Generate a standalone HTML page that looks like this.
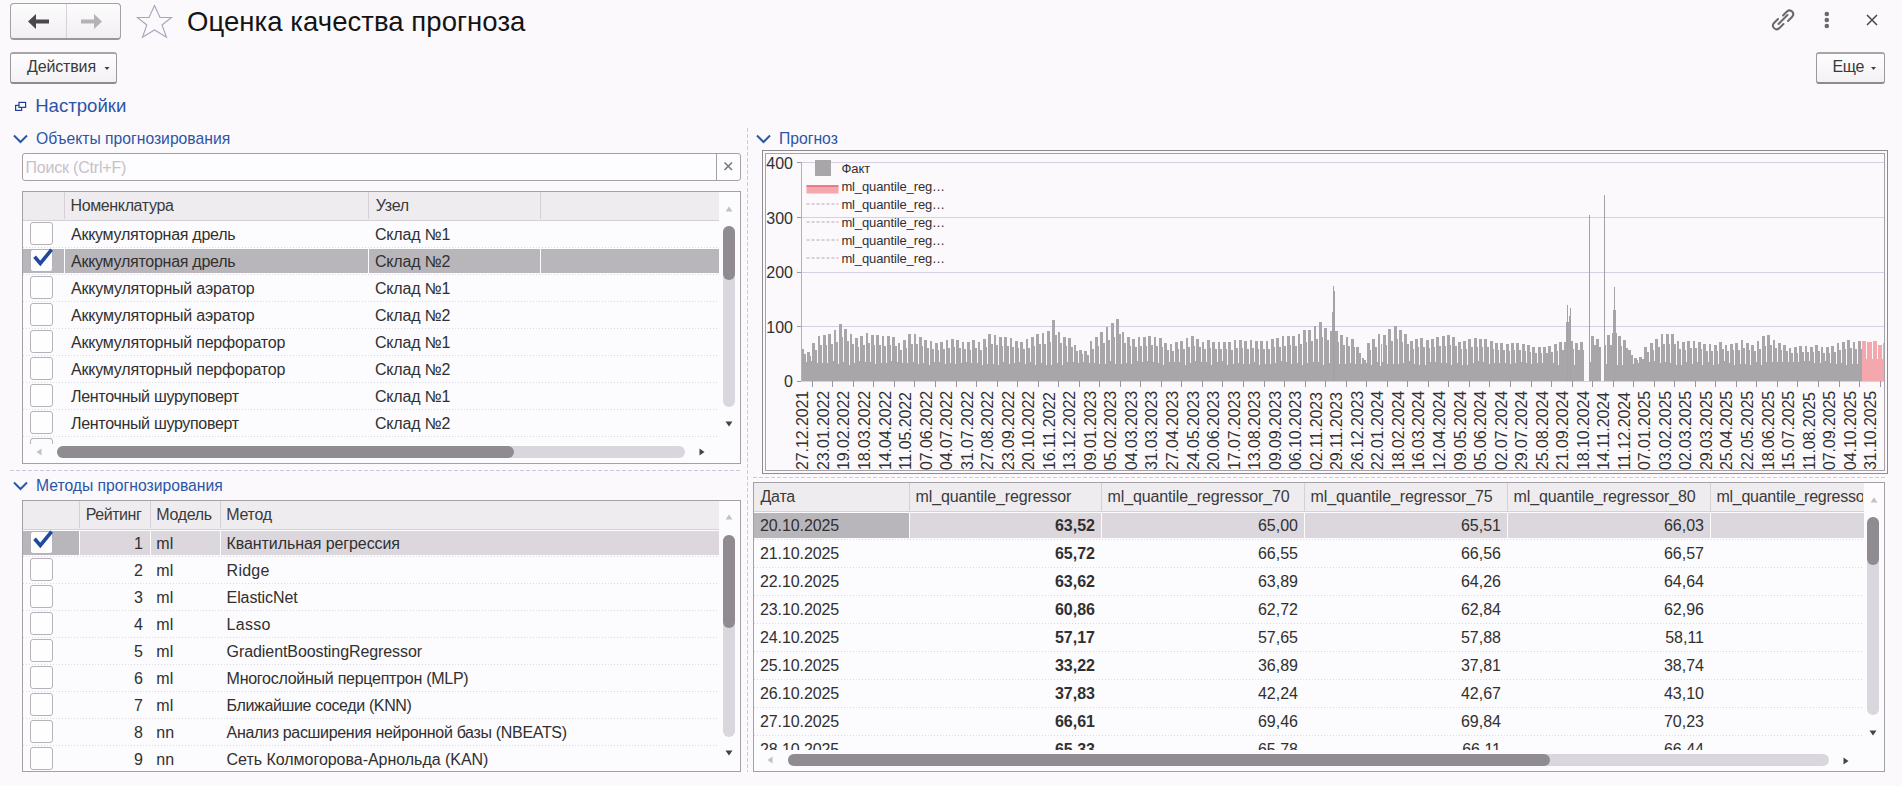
<!DOCTYPE html><html><head><meta charset="utf-8"><style>
html,body{margin:0;padding:0;}
body{width:1902px;height:786px;overflow:hidden;position:relative;background:#fbf9fc;font-family:"Liberation Sans", sans-serif;}
.t{position:absolute;white-space:nowrap;line-height:1;}
svg{position:absolute;overflow:visible;}
</style></head><body><div style="position:absolute;left:10px;top:3px;width:109px;height:34px;border:1px solid #a4a0a6;border-bottom:2px solid #9a969c;border-radius:4px;background:linear-gradient(#fdfcfd,#f1eff2);box-sizing:content-box"></div><div style="position:absolute;left:66px;top:4px;width:1px;height:34px;background:#d6d2d8"></div><svg style="left:0;top:0" width="200" height="45"><path d="M28 21.5 L36 14 L36 19.5 L49 19.5 L49 23.5 L36 23.5 L36 29 Z" fill="#4a484c"/><path d="M102 21.5 L94 14 L94 19.5 L81 19.5 L81 23.5 L94 23.5 L94 29 Z" fill="#b4b2b6"/><path d="M154.5 5.5 L160 17.5 L171.5 17.5 L162 25 L166.5 37.2 L154.5 30 L142.5 37.2 L146.8 25 L137.4 17.5 L149 17.5 Z" fill="none" stroke="#aaa4bc" stroke-width="1.1"/></svg><div class="t" style="left:187.00px;top:7.92px;font-size:27.5px;color:#141414;font-weight:400;letter-spacing:0.06px;">Оценка качества прогноза</div><svg style="left:1760px;top:0" width="130" height="40"><g fill="none" stroke="#6a686c" stroke-width="2" stroke-linecap="round"><path d="M18 19 L13.8 23.2 A3.7 3.7 0 0 0 19 28.4 L23.5 24"/><path d="M23 15.5 L27.2 11.3 A3.7 3.7 0 0 1 32.4 16.5 L28 21"/><path d="M18.5 24 L27.5 15"/></g><circle cx="66.8" cy="14" r="2.3" fill="#6a686c"/><circle cx="66.8" cy="20" r="2.3" fill="#6a686c"/><circle cx="66.8" cy="26" r="2.3" fill="#6a686c"/><path d="M107 15 L117 25 M117 15 L107 25" stroke="#4a484c" stroke-width="1.5"/></svg><div style="position:absolute;left:10px;top:52px;width:105px;height:28px;border:1px solid #9c989e;border-top:2px solid #a8a4a8;border-bottom:2px solid #8e8a90;border-radius:3px;background:linear-gradient(#fefdfe,#f3f1f4)"></div><div class="t" style="left:27.00px;top:59.26px;font-size:16px;color:#3a3a3a;font-weight:400;letter-spacing:-0.15px;">Действия</div><svg style="left:100px;top:60px" width="20" height="20"><path d="M4.5 7 L9.5 7 L7 10 Z" fill="#404040"/></svg><div style="position:absolute;left:1816px;top:52px;width:67px;height:28px;border:1px solid #9c989e;border-top:2px solid #a8a4a8;border-bottom:2px solid #8e8a90;border-radius:3px;background:linear-gradient(#fefdfe,#f3f1f4)"></div><div class="t" style="left:1832.50px;top:59.26px;font-size:16px;color:#3a3a3a;font-weight:400;letter-spacing:-0.3px;">Еще</div><svg style="left:1866px;top:60px" width="20" height="20"><path d="M5 7 L10 7 L7.5 10 Z" fill="#404040"/></svg><svg style="left:10px;top:95px" width="24" height="24"><g fill="none" stroke="#1f3f9c" stroke-width="1.2"><rect x="5.6" y="10.4" width="6" height="5"/><rect x="9" y="7.4" width="6.6" height="5" fill="#fbf9fc"/></g></svg><div class="t" style="left:35.20px;top:97.46px;font-size:18.6px;color:#2b55a6;font-weight:400;letter-spacing:0px;">Настройки</div><svg style="left:13px;top:133.8px" width="20" height="14"><path d="M1 1.5 L7.5 8 L14 1.5" fill="none" stroke="#2b55a6" stroke-width="2"/></svg><div class="t" style="left:36.00px;top:131.31px;font-size:15.7px;color:#2b55a6;font-weight:400;letter-spacing:0px;">Объекты прогнозирования</div><div style="position:absolute;left:22px;top:153px;width:717px;height:26px;border:1px solid #a4a0a6;border-radius:3px;background:#fdfcfe"></div><div style="position:absolute;left:716px;top:154px;width:1px;height:26px;background:#a4a0a6"></div><svg style="left:722px;top:160px" width="14" height="14"><path d="M2.5 2.5 L10 10 M10 2.5 L2.5 10" stroke="#7a787c" stroke-width="1.6"/></svg><div class="t" style="left:25.50px;top:159.96px;font-size:16px;color:#c6c2c8;font-weight:400;letter-spacing:-0.2px;">Поиск (Ctrl+F)</div><div style="position:absolute;left:22px;top:191px;width:717px;height:271px;border:1px solid #a4a0a6;background:#fcfbfd;overflow:hidden"></div><div style="position:absolute;left:23px;top:192px;width:696px;height:28px;background:#efecf0;border-bottom:1px solid #d4d0d6"></div><div style="position:absolute;left:64px;top:192px;width:1px;height:27px;background:#d4d0d6"></div><div style="position:absolute;left:368px;top:192px;width:1px;height:27px;background:#d4d0d6"></div><div style="position:absolute;left:540px;top:192px;width:1px;height:27px;background:#d4d0d6"></div><div class="t" style="left:70.50px;top:198.06px;font-size:16px;color:#3a3a3a;font-weight:400;letter-spacing:-0.37px;">Номенклатура</div><div class="t" style="left:375.80px;top:198.06px;font-size:16px;color:#3a3a3a;font-weight:400;letter-spacing:-0.27px;">Узел</div><div style="position:absolute;left:23px;top:247px;width:696px;height:1px;background-image:linear-gradient(90deg,#dcd8e2 50%,transparent 50%);background-size:3px 1px"></div><div style="position:absolute;left:30px;top:222px;width:21px;height:21px;border:1px solid #b6b2b8;border-radius:3px;background:#fefeff"></div><div class="t" style="left:71.00px;top:226.76px;font-size:16px;color:#303030;font-weight:400;letter-spacing:-0.263px;">Аккумуляторная дрель</div><div class="t" style="left:375.00px;top:226.76px;font-size:16px;color:#303030;font-weight:400;letter-spacing:-0.21px;">Склад №1</div><div style="position:absolute;left:23px;top:249px;width:41px;height:24px;background:#b9b6bb"></div><div style="position:absolute;left:65px;top:249px;width:303px;height:24px;background:#b9b6bb"></div><div style="position:absolute;left:369px;top:249px;width:171px;height:24px;background:#b9b6bb"></div><div style="position:absolute;left:541px;top:249px;width:178px;height:24px;background:#b9b6bb"></div><div style="position:absolute;left:23px;top:274px;width:696px;height:1px;background-image:linear-gradient(90deg,#dcd8e2 50%,transparent 50%);background-size:3px 1px"></div><div style="position:absolute;left:30px;top:249px;width:21px;height:21px;border:1px solid #b6b2b8;border-radius:3px;background:#fefeff"></div><svg style="left:30px;top:246px" width="26" height="26"><path d="M4.6 10.8 L10.3 17.4 L21.6 3.6" fill="none" stroke="#2148a0" stroke-width="3.6" stroke-linejoin="miter"/></svg><div class="t" style="left:71.00px;top:253.76px;font-size:16px;color:#303030;font-weight:400;letter-spacing:-0.263px;">Аккумуляторная дрель</div><div class="t" style="left:375.00px;top:253.76px;font-size:16px;color:#303030;font-weight:400;letter-spacing:-0.21px;">Склад №2</div><div style="position:absolute;left:23px;top:301px;width:696px;height:1px;background-image:linear-gradient(90deg,#dcd8e2 50%,transparent 50%);background-size:3px 1px"></div><div style="position:absolute;left:30px;top:276px;width:21px;height:21px;border:1px solid #b6b2b8;border-radius:3px;background:#fefeff"></div><div class="t" style="left:71.00px;top:280.76px;font-size:16px;color:#303030;font-weight:400;letter-spacing:-0.186px;">Аккумуляторный аэратор</div><div class="t" style="left:375.00px;top:280.76px;font-size:16px;color:#303030;font-weight:400;letter-spacing:-0.21px;">Склад №1</div><div style="position:absolute;left:23px;top:328px;width:696px;height:1px;background-image:linear-gradient(90deg,#dcd8e2 50%,transparent 50%);background-size:3px 1px"></div><div style="position:absolute;left:30px;top:303px;width:21px;height:21px;border:1px solid #b6b2b8;border-radius:3px;background:#fefeff"></div><div class="t" style="left:71.00px;top:307.76px;font-size:16px;color:#303030;font-weight:400;letter-spacing:-0.186px;">Аккумуляторный аэратор</div><div class="t" style="left:375.00px;top:307.76px;font-size:16px;color:#303030;font-weight:400;letter-spacing:-0.21px;">Склад №2</div><div style="position:absolute;left:23px;top:355px;width:696px;height:1px;background-image:linear-gradient(90deg,#dcd8e2 50%,transparent 50%);background-size:3px 1px"></div><div style="position:absolute;left:30px;top:330px;width:21px;height:21px;border:1px solid #b6b2b8;border-radius:3px;background:#fefeff"></div><div class="t" style="left:71.00px;top:334.76px;font-size:16px;color:#303030;font-weight:400;letter-spacing:-0.2px;">Аккумуляторный перфоратор</div><div class="t" style="left:375.00px;top:334.76px;font-size:16px;color:#303030;font-weight:400;letter-spacing:-0.21px;">Склад №1</div><div style="position:absolute;left:23px;top:382px;width:696px;height:1px;background-image:linear-gradient(90deg,#dcd8e2 50%,transparent 50%);background-size:3px 1px"></div><div style="position:absolute;left:30px;top:357px;width:21px;height:21px;border:1px solid #b6b2b8;border-radius:3px;background:#fefeff"></div><div class="t" style="left:71.00px;top:361.76px;font-size:16px;color:#303030;font-weight:400;letter-spacing:-0.2px;">Аккумуляторный перфоратор</div><div class="t" style="left:375.00px;top:361.76px;font-size:16px;color:#303030;font-weight:400;letter-spacing:-0.21px;">Склад №2</div><div style="position:absolute;left:23px;top:409px;width:696px;height:1px;background-image:linear-gradient(90deg,#dcd8e2 50%,transparent 50%);background-size:3px 1px"></div><div style="position:absolute;left:30px;top:384px;width:21px;height:21px;border:1px solid #b6b2b8;border-radius:3px;background:#fefeff"></div><div class="t" style="left:71.00px;top:388.76px;font-size:16px;color:#303030;font-weight:400;letter-spacing:-0.31px;">Ленточный шуруповерт</div><div class="t" style="left:375.00px;top:388.76px;font-size:16px;color:#303030;font-weight:400;letter-spacing:-0.21px;">Склад №1</div><div style="position:absolute;left:23px;top:436px;width:696px;height:1px;background-image:linear-gradient(90deg,#dcd8e2 50%,transparent 50%);background-size:3px 1px"></div><div style="position:absolute;left:30px;top:411px;width:21px;height:21px;border:1px solid #b6b2b8;border-radius:3px;background:#fefeff"></div><div class="t" style="left:71.00px;top:415.76px;font-size:16px;color:#303030;font-weight:400;letter-spacing:-0.31px;">Ленточный шуруповерт</div><div class="t" style="left:375.00px;top:415.76px;font-size:16px;color:#303030;font-weight:400;letter-spacing:-0.21px;">Склад №2</div><div style="position:absolute;left:30px;top:438px;width:23px;height:8px;overflow:hidden"><div style="width:21px;height:21px;border:1px solid #b6b2b8;border-radius:3px"></div></div><div style="position:absolute;left:23px;top:439px;width:696px;height:24px;background:#fcfbfd"></div><div style="position:absolute;left:30px;top:438px;width:23px;height:6px;overflow:hidden"><div style="width:21px;height:21px;border:1px solid #b6b2b8;border-radius:3px"></div></div><svg style="left:723px;top:202.5px" width="12" height="12"><path d="M2.5 8.5 L9.5 8.5 L6 3.5 Z" fill="#c4c0c6"/></svg><div style="position:absolute;left:723px;top:226px;width:12px;height:181px;background:#dad6de;border-radius:6px"></div><div style="position:absolute;left:723px;top:226px;width:12px;height:54px;background:#8f8b91;border-radius:6px"></div><svg style="left:723px;top:418px" width="12" height="12"><path d="M2.5 3.5 L9.5 3.5 L6 8.5 Z" fill="#444246"/></svg><svg style="left:33px;top:446px" width="12" height="12"><path d="M8.5 2.5 L8.5 9.5 L3.5 6 Z" fill="#c4c0c6"/></svg><div style="position:absolute;left:57px;top:446px;width:628px;height:12px;background:#dad6de;border-radius:6px"></div><div style="position:absolute;left:57px;top:446px;width:457px;height:12px;background:#8f8b91;border-radius:6px"></div><svg style="left:696px;top:446px" width="12" height="12"><path d="M3.5 2.5 L3.5 9.5 L8.5 6 Z" fill="#444246"/></svg><div style="position:absolute;left:10px;top:470px;width:731px;height:1px;background-image:linear-gradient(90deg,#cfc8e4 60%,transparent 60%);background-size:6px 1px"></div><div style="position:absolute;left:747px;top:128px;width:1px;height:644px;background-image:linear-gradient(180deg,#cfc8e4 60%,transparent 60%);background-size:1px 6px"></div><div style="position:absolute;left:753px;top:477px;width:1132px;height:1px;background-image:linear-gradient(90deg,#cfc8e4 60%,transparent 60%);background-size:6px 1px"></div><svg style="left:13px;top:481px" width="20" height="14"><path d="M1 1.5 L7.5 8 L14 1.5" fill="none" stroke="#2b55a6" stroke-width="2"/></svg><div class="t" style="left:36.00px;top:478.21px;font-size:15.7px;color:#2b55a6;font-weight:400;letter-spacing:0px;">Методы прогнозирования</div><div style="position:absolute;left:22px;top:500px;width:717px;height:270px;border:1px solid #a4a0a6;background:#fcfbfd"></div><div style="position:absolute;left:23px;top:501px;width:696px;height:28px;background:#efecf0;border-bottom:1px solid #d4d0d6"></div><div style="position:absolute;left:79px;top:501px;width:1px;height:27px;background:#d4d0d6"></div><div style="position:absolute;left:150px;top:501px;width:1px;height:27px;background:#d4d0d6"></div><div style="position:absolute;left:220px;top:501px;width:1px;height:27px;background:#d4d0d6"></div><div class="t" style="left:85.70px;top:507.26px;font-size:16px;color:#3a3a3a;font-weight:400;letter-spacing:-0.45px;">Рейтинг</div><div class="t" style="left:156.20px;top:507.26px;font-size:16px;color:#3a3a3a;font-weight:400;letter-spacing:-0.3px;">Модель</div><div class="t" style="left:226.30px;top:507.26px;font-size:16px;color:#3a3a3a;font-weight:400;letter-spacing:-0.3px;">Метод</div><div style="position:absolute;left:23px;top:531px;width:56px;height:24px;background:#b9b6bb"></div><div style="position:absolute;left:80px;top:531px;width:70px;height:24px;background:#dcd7dd"></div><div style="position:absolute;left:151px;top:531px;width:69px;height:24px;background:#dcd7dd"></div><div style="position:absolute;left:221px;top:531px;width:498px;height:24px;background:#dcd7dd"></div><div style="position:absolute;left:23px;top:556px;width:696px;height:1px;background-image:linear-gradient(90deg,#dcd8e2 50%,transparent 50%);background-size:3px 1px"></div><div style="position:absolute;left:30px;top:531px;width:21px;height:21px;border:1px solid #b6b2b8;border-radius:3px;background:#fefeff"></div><svg style="left:30px;top:528px" width="26" height="26"><path d="M4.6 10.8 L10.3 17.4 L21.6 3.6" fill="none" stroke="#2148a0" stroke-width="3.6" stroke-linejoin="miter"/></svg><div class="t" style="right:1759.00px;top:535.76px;font-size:16px;color:#303030;font-weight:400;letter-spacing:0px">1</div><div class="t" style="left:156.30px;top:535.76px;font-size:16px;color:#303030;font-weight:400;letter-spacing:0px;">ml</div><div class="t" style="left:226.60px;top:535.76px;font-size:16px;color:#303030;font-weight:400;letter-spacing:-0.09px;">Квантильная регрессия</div><div style="position:absolute;left:23px;top:583px;width:696px;height:1px;background-image:linear-gradient(90deg,#dcd8e2 50%,transparent 50%);background-size:3px 1px"></div><div style="position:absolute;left:30px;top:558px;width:21px;height:21px;border:1px solid #b6b2b8;border-radius:3px;background:#fefeff"></div><div class="t" style="right:1759.00px;top:562.76px;font-size:16px;color:#303030;font-weight:400;letter-spacing:0px">2</div><div class="t" style="left:156.30px;top:562.76px;font-size:16px;color:#303030;font-weight:400;letter-spacing:0px;">ml</div><div class="t" style="left:226.60px;top:562.76px;font-size:16px;color:#303030;font-weight:400;letter-spacing:0.25px;">Ridge</div><div style="position:absolute;left:23px;top:610px;width:696px;height:1px;background-image:linear-gradient(90deg,#dcd8e2 50%,transparent 50%);background-size:3px 1px"></div><div style="position:absolute;left:30px;top:585px;width:21px;height:21px;border:1px solid #b6b2b8;border-radius:3px;background:#fefeff"></div><div class="t" style="right:1759.00px;top:589.76px;font-size:16px;color:#303030;font-weight:400;letter-spacing:0px">3</div><div class="t" style="left:156.30px;top:589.76px;font-size:16px;color:#303030;font-weight:400;letter-spacing:0px;">ml</div><div class="t" style="left:226.60px;top:589.76px;font-size:16px;color:#303030;font-weight:400;letter-spacing:-0.11px;">ElasticNet</div><div style="position:absolute;left:23px;top:637px;width:696px;height:1px;background-image:linear-gradient(90deg,#dcd8e2 50%,transparent 50%);background-size:3px 1px"></div><div style="position:absolute;left:30px;top:612px;width:21px;height:21px;border:1px solid #b6b2b8;border-radius:3px;background:#fefeff"></div><div class="t" style="right:1759.00px;top:616.76px;font-size:16px;color:#303030;font-weight:400;letter-spacing:0px">4</div><div class="t" style="left:156.30px;top:616.76px;font-size:16px;color:#303030;font-weight:400;letter-spacing:0px;">ml</div><div class="t" style="left:226.60px;top:616.76px;font-size:16px;color:#303030;font-weight:400;letter-spacing:0.25px;">Lasso</div><div style="position:absolute;left:23px;top:664px;width:696px;height:1px;background-image:linear-gradient(90deg,#dcd8e2 50%,transparent 50%);background-size:3px 1px"></div><div style="position:absolute;left:30px;top:639px;width:21px;height:21px;border:1px solid #b6b2b8;border-radius:3px;background:#fefeff"></div><div class="t" style="right:1759.00px;top:643.76px;font-size:16px;color:#303030;font-weight:400;letter-spacing:0px">5</div><div class="t" style="left:156.30px;top:643.76px;font-size:16px;color:#303030;font-weight:400;letter-spacing:0px;">ml</div><div class="t" style="left:226.60px;top:643.76px;font-size:16px;color:#303030;font-weight:400;letter-spacing:-0.08px;">GradientBoostingRegressor</div><div style="position:absolute;left:23px;top:691px;width:696px;height:1px;background-image:linear-gradient(90deg,#dcd8e2 50%,transparent 50%);background-size:3px 1px"></div><div style="position:absolute;left:30px;top:666px;width:21px;height:21px;border:1px solid #b6b2b8;border-radius:3px;background:#fefeff"></div><div class="t" style="right:1759.00px;top:670.76px;font-size:16px;color:#303030;font-weight:400;letter-spacing:0px">6</div><div class="t" style="left:156.30px;top:670.76px;font-size:16px;color:#303030;font-weight:400;letter-spacing:0px;">ml</div><div class="t" style="left:226.60px;top:670.76px;font-size:16px;color:#303030;font-weight:400;letter-spacing:-0.264px;">Многослойный перцептрон (MLP)</div><div style="position:absolute;left:23px;top:718px;width:696px;height:1px;background-image:linear-gradient(90deg,#dcd8e2 50%,transparent 50%);background-size:3px 1px"></div><div style="position:absolute;left:30px;top:693px;width:21px;height:21px;border:1px solid #b6b2b8;border-radius:3px;background:#fefeff"></div><div class="t" style="right:1759.00px;top:697.76px;font-size:16px;color:#303030;font-weight:400;letter-spacing:0px">7</div><div class="t" style="left:156.30px;top:697.76px;font-size:16px;color:#303030;font-weight:400;letter-spacing:0px;">ml</div><div class="t" style="left:226.60px;top:697.76px;font-size:16px;color:#303030;font-weight:400;letter-spacing:-0.37px;">Ближайшие соседи (KNN)</div><div style="position:absolute;left:23px;top:745px;width:696px;height:1px;background-image:linear-gradient(90deg,#dcd8e2 50%,transparent 50%);background-size:3px 1px"></div><div style="position:absolute;left:30px;top:720px;width:21px;height:21px;border:1px solid #b6b2b8;border-radius:3px;background:#fefeff"></div><div class="t" style="right:1759.00px;top:724.76px;font-size:16px;color:#303030;font-weight:400;letter-spacing:0px">8</div><div class="t" style="left:156.30px;top:724.76px;font-size:16px;color:#303030;font-weight:400;letter-spacing:0px;">nn</div><div class="t" style="left:226.60px;top:724.76px;font-size:16px;color:#303030;font-weight:400;letter-spacing:-0.325px;">Анализ расширения нейронной базы (NBEATS)</div><div style="position:absolute;left:30px;top:747px;width:21px;height:21px;border:1px solid #b6b2b8;border-radius:3px;background:#fefeff"></div><div class="t" style="right:1759.00px;top:751.76px;font-size:16px;color:#303030;font-weight:400;letter-spacing:0px">9</div><div class="t" style="left:156.30px;top:751.76px;font-size:16px;color:#303030;font-weight:400;letter-spacing:0px;">nn</div><div class="t" style="left:226.60px;top:751.76px;font-size:16px;color:#303030;font-weight:400;letter-spacing:-0.03px;">Сеть Колмогорова-Арнольда (KAN)</div><svg style="left:723px;top:511px" width="12" height="12"><path d="M2.5 8.5 L9.5 8.5 L6 3.5 Z" fill="#c4c0c6"/></svg><div style="position:absolute;left:723px;top:535px;width:12px;height:202px;background:#dad6de;border-radius:6px"></div><div style="position:absolute;left:723px;top:535px;width:12px;height:93px;background:#8f8b91;border-radius:6px"></div><svg style="left:723px;top:746.5px" width="12" height="12"><path d="M2.5 3.5 L9.5 3.5 L6 8.5 Z" fill="#444246"/></svg><svg style="left:756px;top:133.8px" width="20" height="14"><path d="M1 1.5 L7.5 8 L14 1.5" fill="none" stroke="#2b55a6" stroke-width="2"/></svg><div class="t" style="left:779.00px;top:131.31px;font-size:15.7px;color:#2b55a6;font-weight:400;letter-spacing:0px;">Прогноз</div><div style="position:absolute;left:762px;top:150px;width:1124px;height:322px;border:1px solid #8e8a90"></div><div style="position:absolute;left:765px;top:153px;width:1118px;height:316px;border:1px solid #a6a2a8"></div><svg style="left:0;top:0" width="1902" height="786" shape-rendering="crispEdges"><line x1="797" y1="381.5" x2="1884" y2="381.5" stroke="#d8cfe6" stroke-width="1"/><line x1="797" y1="326.5" x2="1884" y2="326.5" stroke="#d8cfe6" stroke-width="1"/><line x1="797" y1="272.5" x2="1884" y2="272.5" stroke="#d8cfe6" stroke-width="1"/><line x1="797" y1="217.5" x2="1884" y2="217.5" stroke="#d8cfe6" stroke-width="1"/><line x1="797" y1="162.5" x2="1884" y2="162.5" stroke="#d8cfe6" stroke-width="1"/><line x1="801.5" y1="162" x2="801.5" y2="381" stroke="#bfaab8" stroke-width="1"/><line x1="797" y1="381.5" x2="801" y2="381.5" stroke="#9a96a0" stroke-width="1"/><line x1="797" y1="326.5" x2="801" y2="326.5" stroke="#9a96a0" stroke-width="1"/><line x1="797" y1="272.5" x2="801" y2="272.5" stroke="#9a96a0" stroke-width="1"/><line x1="797" y1="217.5" x2="801" y2="217.5" stroke="#9a96a0" stroke-width="1"/><line x1="797" y1="162.5" x2="801" y2="162.5" stroke="#9a96a0" stroke-width="1"/><line x1="812.5" y1="381" x2="812.5" y2="387" stroke="#9a96a0" stroke-width="1"/><line x1="832.5" y1="381" x2="832.5" y2="387" stroke="#9a96a0" stroke-width="1"/><line x1="853.5" y1="381" x2="853.5" y2="387" stroke="#9a96a0" stroke-width="1"/><line x1="873.5" y1="381" x2="873.5" y2="387" stroke="#9a96a0" stroke-width="1"/><line x1="894.5" y1="381" x2="894.5" y2="387" stroke="#9a96a0" stroke-width="1"/><line x1="914.5" y1="381" x2="914.5" y2="387" stroke="#9a96a0" stroke-width="1"/><line x1="935.5" y1="381" x2="935.5" y2="387" stroke="#9a96a0" stroke-width="1"/><line x1="956.5" y1="381" x2="956.5" y2="387" stroke="#9a96a0" stroke-width="1"/><line x1="976.5" y1="381" x2="976.5" y2="387" stroke="#9a96a0" stroke-width="1"/><line x1="997.5" y1="381" x2="997.5" y2="387" stroke="#9a96a0" stroke-width="1"/><line x1="1017.5" y1="381" x2="1017.5" y2="387" stroke="#9a96a0" stroke-width="1"/><line x1="1038.5" y1="381" x2="1038.5" y2="387" stroke="#9a96a0" stroke-width="1"/><line x1="1058.5" y1="381" x2="1058.5" y2="387" stroke="#9a96a0" stroke-width="1"/><line x1="1079.5" y1="381" x2="1079.5" y2="387" stroke="#9a96a0" stroke-width="1"/><line x1="1099.5" y1="381" x2="1099.5" y2="387" stroke="#9a96a0" stroke-width="1"/><line x1="1120.5" y1="381" x2="1120.5" y2="387" stroke="#9a96a0" stroke-width="1"/><line x1="1140.5" y1="381" x2="1140.5" y2="387" stroke="#9a96a0" stroke-width="1"/><line x1="1161.5" y1="381" x2="1161.5" y2="387" stroke="#9a96a0" stroke-width="1"/><line x1="1181.5" y1="381" x2="1181.5" y2="387" stroke="#9a96a0" stroke-width="1"/><line x1="1202.5" y1="381" x2="1202.5" y2="387" stroke="#9a96a0" stroke-width="1"/><line x1="1222.5" y1="381" x2="1222.5" y2="387" stroke="#9a96a0" stroke-width="1"/><line x1="1243.5" y1="381" x2="1243.5" y2="387" stroke="#9a96a0" stroke-width="1"/><line x1="1264.5" y1="381" x2="1264.5" y2="387" stroke="#9a96a0" stroke-width="1"/><line x1="1284.5" y1="381" x2="1284.5" y2="387" stroke="#9a96a0" stroke-width="1"/><line x1="1305.5" y1="381" x2="1305.5" y2="387" stroke="#9a96a0" stroke-width="1"/><line x1="1325.5" y1="381" x2="1325.5" y2="387" stroke="#9a96a0" stroke-width="1"/><line x1="1346.5" y1="381" x2="1346.5" y2="387" stroke="#9a96a0" stroke-width="1"/><line x1="1366.5" y1="381" x2="1366.5" y2="387" stroke="#9a96a0" stroke-width="1"/><line x1="1387.5" y1="381" x2="1387.5" y2="387" stroke="#9a96a0" stroke-width="1"/><line x1="1407.5" y1="381" x2="1407.5" y2="387" stroke="#9a96a0" stroke-width="1"/><line x1="1428.5" y1="381" x2="1428.5" y2="387" stroke="#9a96a0" stroke-width="1"/><line x1="1448.5" y1="381" x2="1448.5" y2="387" stroke="#9a96a0" stroke-width="1"/><line x1="1469.5" y1="381" x2="1469.5" y2="387" stroke="#9a96a0" stroke-width="1"/><line x1="1489.5" y1="381" x2="1489.5" y2="387" stroke="#9a96a0" stroke-width="1"/><line x1="1510.5" y1="381" x2="1510.5" y2="387" stroke="#9a96a0" stroke-width="1"/><line x1="1531.5" y1="381" x2="1531.5" y2="387" stroke="#9a96a0" stroke-width="1"/><line x1="1551.5" y1="381" x2="1551.5" y2="387" stroke="#9a96a0" stroke-width="1"/><line x1="1572.5" y1="381" x2="1572.5" y2="387" stroke="#9a96a0" stroke-width="1"/><line x1="1592.5" y1="381" x2="1592.5" y2="387" stroke="#9a96a0" stroke-width="1"/><line x1="1613.5" y1="381" x2="1613.5" y2="387" stroke="#9a96a0" stroke-width="1"/><line x1="1633.5" y1="381" x2="1633.5" y2="387" stroke="#9a96a0" stroke-width="1"/><line x1="1654.5" y1="381" x2="1654.5" y2="387" stroke="#9a96a0" stroke-width="1"/><line x1="1674.5" y1="381" x2="1674.5" y2="387" stroke="#9a96a0" stroke-width="1"/><line x1="1695.5" y1="381" x2="1695.5" y2="387" stroke="#9a96a0" stroke-width="1"/><line x1="1715.5" y1="381" x2="1715.5" y2="387" stroke="#9a96a0" stroke-width="1"/><line x1="1736.5" y1="381" x2="1736.5" y2="387" stroke="#9a96a0" stroke-width="1"/><line x1="1756.5" y1="381" x2="1756.5" y2="387" stroke="#9a96a0" stroke-width="1"/><line x1="1777.5" y1="381" x2="1777.5" y2="387" stroke="#9a96a0" stroke-width="1"/><line x1="1797.5" y1="381" x2="1797.5" y2="387" stroke="#9a96a0" stroke-width="1"/><line x1="1818.5" y1="381" x2="1818.5" y2="387" stroke="#9a96a0" stroke-width="1"/><line x1="1839.5" y1="381" x2="1839.5" y2="387" stroke="#9a96a0" stroke-width="1"/><line x1="1859.5" y1="381" x2="1859.5" y2="387" stroke="#9a96a0" stroke-width="1"/><line x1="1880.5" y1="381" x2="1880.5" y2="387" stroke="#9a96a0" stroke-width="1"/><rect x="801.5" y="366" width="1061" height="15" fill="#a8a6a9"/><rect x="801.50" y="348.7" width="2.77" height="32.3" fill="#a8a6a9"/><rect x="804.27" y="353.7" width="1.60" height="27.3" fill="#a8a6a9"/><rect x="805.88" y="361.6" width="1.01" height="19.4" fill="#a8a6a9"/><rect x="806.84" y="352.0" width="2.77" height="29.0" fill="#a8a6a9"/><rect x="809.61" y="355.8" width="1.60" height="25.2" fill="#a8a6a9"/><rect x="811.21" y="361.3" width="1.01" height="19.7" fill="#a8a6a9"/><rect x="812.17" y="343.1" width="2.77" height="37.9" fill="#a8a6a9"/><rect x="814.95" y="350.0" width="1.60" height="31.0" fill="#a8a6a9"/><rect x="816.55" y="362.5" width="1.01" height="18.5" fill="#a8a6a9"/><rect x="817.51" y="335.9" width="2.77" height="45.1" fill="#a8a6a9"/><rect x="820.28" y="345.4" width="1.60" height="35.6" fill="#a8a6a9"/><rect x="821.88" y="363.0" width="1.01" height="18.0" fill="#a8a6a9"/><rect x="822.84" y="335.1" width="2.77" height="45.9" fill="#a8a6a9"/><rect x="825.62" y="344.9" width="1.60" height="36.1" fill="#a8a6a9"/><rect x="827.22" y="362.7" width="1.01" height="18.3" fill="#a8a6a9"/><rect x="828.18" y="334.0" width="2.77" height="47.0" fill="#a8a6a9"/><rect x="830.95" y="344.1" width="1.60" height="36.9" fill="#a8a6a9"/><rect x="832.55" y="361.4" width="1.01" height="19.6" fill="#a8a6a9"/><rect x="833.51" y="330.3" width="2.77" height="50.7" fill="#a8a6a9"/><rect x="836.29" y="341.7" width="1.60" height="39.3" fill="#a8a6a9"/><rect x="837.89" y="364.3" width="1.01" height="16.7" fill="#a8a6a9"/><rect x="838.85" y="323.5" width="2.77" height="57.5" fill="#a8a6a9"/><rect x="841.62" y="337.3" width="1.60" height="43.7" fill="#a8a6a9"/><rect x="843.22" y="361.9" width="1.01" height="19.1" fill="#a8a6a9"/><rect x="844.18" y="328.7" width="2.77" height="52.3" fill="#a8a6a9"/><rect x="846.96" y="340.7" width="1.60" height="40.3" fill="#a8a6a9"/><rect x="848.56" y="364.8" width="1.01" height="16.2" fill="#a8a6a9"/><rect x="849.52" y="333.6" width="2.77" height="47.4" fill="#a8a6a9"/><rect x="852.29" y="343.9" width="1.60" height="37.1" fill="#a8a6a9"/><rect x="853.89" y="362.6" width="1.01" height="18.4" fill="#a8a6a9"/><rect x="854.85" y="338.0" width="2.77" height="43.0" fill="#a8a6a9"/><rect x="857.63" y="346.7" width="1.60" height="34.3" fill="#a8a6a9"/><rect x="859.23" y="361.2" width="1.01" height="19.8" fill="#a8a6a9"/><rect x="860.19" y="335.9" width="2.77" height="45.1" fill="#a8a6a9"/><rect x="862.96" y="345.4" width="1.60" height="35.6" fill="#a8a6a9"/><rect x="864.56" y="362.2" width="1.01" height="18.8" fill="#a8a6a9"/><rect x="865.52" y="332.6" width="2.77" height="48.4" fill="#a8a6a9"/><rect x="868.30" y="343.3" width="1.60" height="37.7" fill="#a8a6a9"/><rect x="869.90" y="361.5" width="1.01" height="19.5" fill="#a8a6a9"/><rect x="870.86" y="335.4" width="2.77" height="45.6" fill="#a8a6a9"/><rect x="873.63" y="345.0" width="1.60" height="36.0" fill="#a8a6a9"/><rect x="875.24" y="364.3" width="1.01" height="16.7" fill="#a8a6a9"/><rect x="876.20" y="335.4" width="2.77" height="45.6" fill="#a8a6a9"/><rect x="878.97" y="345.1" width="1.60" height="35.9" fill="#a8a6a9"/><rect x="880.57" y="363.3" width="1.01" height="17.7" fill="#a8a6a9"/><rect x="881.53" y="336.4" width="2.77" height="44.6" fill="#a8a6a9"/><rect x="884.31" y="345.7" width="1.60" height="35.3" fill="#a8a6a9"/><rect x="885.91" y="362.5" width="1.01" height="18.5" fill="#a8a6a9"/><rect x="886.87" y="335.5" width="2.77" height="45.5" fill="#a8a6a9"/><rect x="889.64" y="345.1" width="1.60" height="35.9" fill="#a8a6a9"/><rect x="891.24" y="361.3" width="1.01" height="19.7" fill="#a8a6a9"/><rect x="892.20" y="336.9" width="2.77" height="44.1" fill="#a8a6a9"/><rect x="894.98" y="346.0" width="1.60" height="35.0" fill="#a8a6a9"/><rect x="896.58" y="361.8" width="1.01" height="19.2" fill="#a8a6a9"/><rect x="897.54" y="342.7" width="2.77" height="38.3" fill="#a8a6a9"/><rect x="900.31" y="349.8" width="1.60" height="31.2" fill="#a8a6a9"/><rect x="901.91" y="362.7" width="1.01" height="18.3" fill="#a8a6a9"/><rect x="902.87" y="339.9" width="2.77" height="41.1" fill="#a8a6a9"/><rect x="905.65" y="348.0" width="1.60" height="33.0" fill="#a8a6a9"/><rect x="907.25" y="363.3" width="1.01" height="17.7" fill="#a8a6a9"/><rect x="908.21" y="334.4" width="2.77" height="46.6" fill="#a8a6a9"/><rect x="910.98" y="344.4" width="1.60" height="36.6" fill="#a8a6a9"/><rect x="912.58" y="362.2" width="1.01" height="18.8" fill="#a8a6a9"/><rect x="913.54" y="334.3" width="2.77" height="46.7" fill="#a8a6a9"/><rect x="916.32" y="344.3" width="1.60" height="36.7" fill="#a8a6a9"/><rect x="917.92" y="363.8" width="1.01" height="17.2" fill="#a8a6a9"/><rect x="918.88" y="337.1" width="2.77" height="43.9" fill="#a8a6a9"/><rect x="921.65" y="346.2" width="1.60" height="34.8" fill="#a8a6a9"/><rect x="923.25" y="363.3" width="1.01" height="17.7" fill="#a8a6a9"/><rect x="924.21" y="340.1" width="2.77" height="40.9" fill="#a8a6a9"/><rect x="926.99" y="348.1" width="1.60" height="32.9" fill="#a8a6a9"/><rect x="928.59" y="364.5" width="1.01" height="16.5" fill="#a8a6a9"/><rect x="929.55" y="341.4" width="2.77" height="39.6" fill="#a8a6a9"/><rect x="932.32" y="349.0" width="1.60" height="32.0" fill="#a8a6a9"/><rect x="933.92" y="362.2" width="1.01" height="18.8" fill="#a8a6a9"/><rect x="934.89" y="343.1" width="2.77" height="37.9" fill="#a8a6a9"/><rect x="937.66" y="350.1" width="1.60" height="30.9" fill="#a8a6a9"/><rect x="939.26" y="361.5" width="1.01" height="19.5" fill="#a8a6a9"/><rect x="940.22" y="341.8" width="2.77" height="39.2" fill="#a8a6a9"/><rect x="942.99" y="349.2" width="1.60" height="31.8" fill="#a8a6a9"/><rect x="944.60" y="364.0" width="1.01" height="17.0" fill="#a8a6a9"/><rect x="945.56" y="340.2" width="2.77" height="40.8" fill="#a8a6a9"/><rect x="948.33" y="348.2" width="1.60" height="32.8" fill="#a8a6a9"/><rect x="949.93" y="363.0" width="1.01" height="18.0" fill="#a8a6a9"/><rect x="950.89" y="339.0" width="2.77" height="42.0" fill="#a8a6a9"/><rect x="953.67" y="347.4" width="1.60" height="33.6" fill="#a8a6a9"/><rect x="955.27" y="363.7" width="1.01" height="17.3" fill="#a8a6a9"/><rect x="956.23" y="340.1" width="2.77" height="40.9" fill="#a8a6a9"/><rect x="959.00" y="348.1" width="1.60" height="32.9" fill="#a8a6a9"/><rect x="960.60" y="363.3" width="1.01" height="17.7" fill="#a8a6a9"/><rect x="961.56" y="341.6" width="2.77" height="39.4" fill="#a8a6a9"/><rect x="964.34" y="349.1" width="1.60" height="31.9" fill="#a8a6a9"/><rect x="965.94" y="362.3" width="1.01" height="18.7" fill="#a8a6a9"/><rect x="966.90" y="342.2" width="2.77" height="38.8" fill="#a8a6a9"/><rect x="969.67" y="349.5" width="1.60" height="31.5" fill="#a8a6a9"/><rect x="971.27" y="363.4" width="1.01" height="17.6" fill="#a8a6a9"/><rect x="972.23" y="340.3" width="2.77" height="40.7" fill="#a8a6a9"/><rect x="975.01" y="348.2" width="1.60" height="32.8" fill="#a8a6a9"/><rect x="976.61" y="362.8" width="1.01" height="18.2" fill="#a8a6a9"/><rect x="977.57" y="342.2" width="2.77" height="38.8" fill="#a8a6a9"/><rect x="980.34" y="349.5" width="1.60" height="31.5" fill="#a8a6a9"/><rect x="981.94" y="364.8" width="1.01" height="16.2" fill="#a8a6a9"/><rect x="982.90" y="338.7" width="2.77" height="42.3" fill="#a8a6a9"/><rect x="985.68" y="347.2" width="1.60" height="33.8" fill="#a8a6a9"/><rect x="987.28" y="363.7" width="1.01" height="17.3" fill="#a8a6a9"/><rect x="988.24" y="333.7" width="2.77" height="47.3" fill="#a8a6a9"/><rect x="991.01" y="344.0" width="1.60" height="37.0" fill="#a8a6a9"/><rect x="992.61" y="363.8" width="1.01" height="17.2" fill="#a8a6a9"/><rect x="993.57" y="335.2" width="2.77" height="45.8" fill="#a8a6a9"/><rect x="996.35" y="344.9" width="1.60" height="36.1" fill="#a8a6a9"/><rect x="997.95" y="365.0" width="1.01" height="16.0" fill="#a8a6a9"/><rect x="998.91" y="336.7" width="2.77" height="44.3" fill="#a8a6a9"/><rect x="1001.68" y="345.9" width="1.60" height="35.1" fill="#a8a6a9"/><rect x="1003.28" y="362.1" width="1.01" height="18.9" fill="#a8a6a9"/><rect x="1004.25" y="337.4" width="2.77" height="43.6" fill="#a8a6a9"/><rect x="1007.02" y="346.3" width="1.60" height="34.7" fill="#a8a6a9"/><rect x="1008.62" y="363.7" width="1.01" height="17.3" fill="#a8a6a9"/><rect x="1009.58" y="338.4" width="2.77" height="42.6" fill="#a8a6a9"/><rect x="1012.36" y="347.0" width="1.60" height="34.0" fill="#a8a6a9"/><rect x="1013.96" y="362.8" width="1.01" height="18.2" fill="#a8a6a9"/><rect x="1014.92" y="340.5" width="2.77" height="40.5" fill="#a8a6a9"/><rect x="1017.69" y="348.4" width="1.60" height="32.6" fill="#a8a6a9"/><rect x="1019.29" y="361.5" width="1.01" height="19.5" fill="#a8a6a9"/><rect x="1020.25" y="341.6" width="2.77" height="39.4" fill="#a8a6a9"/><rect x="1023.03" y="349.1" width="1.60" height="31.9" fill="#a8a6a9"/><rect x="1024.63" y="364.1" width="1.01" height="16.9" fill="#a8a6a9"/><rect x="1025.59" y="339.1" width="2.77" height="41.9" fill="#a8a6a9"/><rect x="1028.36" y="347.5" width="1.60" height="33.5" fill="#a8a6a9"/><rect x="1029.96" y="362.0" width="1.01" height="19.0" fill="#a8a6a9"/><rect x="1030.92" y="337.3" width="2.77" height="43.7" fill="#a8a6a9"/><rect x="1033.70" y="346.3" width="1.60" height="34.7" fill="#a8a6a9"/><rect x="1035.30" y="364.5" width="1.01" height="16.5" fill="#a8a6a9"/><rect x="1036.26" y="334.2" width="2.77" height="46.8" fill="#a8a6a9"/><rect x="1039.03" y="344.3" width="1.60" height="36.7" fill="#a8a6a9"/><rect x="1040.63" y="362.8" width="1.01" height="18.2" fill="#a8a6a9"/><rect x="1041.59" y="333.2" width="2.77" height="47.8" fill="#a8a6a9"/><rect x="1044.37" y="343.6" width="1.60" height="37.4" fill="#a8a6a9"/><rect x="1045.97" y="364.5" width="1.01" height="16.5" fill="#a8a6a9"/><rect x="1046.93" y="330.6" width="2.77" height="50.4" fill="#a8a6a9"/><rect x="1049.70" y="342.0" width="1.60" height="39.0" fill="#a8a6a9"/><rect x="1051.30" y="364.5" width="1.01" height="16.5" fill="#a8a6a9"/><rect x="1052.26" y="319.8" width="2.77" height="61.2" fill="#a8a6a9"/><rect x="1055.04" y="334.9" width="1.60" height="46.1" fill="#a8a6a9"/><rect x="1056.64" y="362.7" width="1.01" height="18.3" fill="#a8a6a9"/><rect x="1057.60" y="332.4" width="2.77" height="48.6" fill="#a8a6a9"/><rect x="1060.37" y="343.1" width="1.60" height="37.9" fill="#a8a6a9"/><rect x="1061.97" y="364.5" width="1.01" height="16.5" fill="#a8a6a9"/><rect x="1062.93" y="336.6" width="2.77" height="44.4" fill="#a8a6a9"/><rect x="1065.71" y="345.8" width="1.60" height="35.2" fill="#a8a6a9"/><rect x="1067.31" y="361.6" width="1.01" height="19.4" fill="#a8a6a9"/><rect x="1068.27" y="337.8" width="2.77" height="43.2" fill="#a8a6a9"/><rect x="1071.04" y="346.6" width="1.60" height="34.4" fill="#a8a6a9"/><rect x="1072.65" y="361.9" width="1.01" height="19.1" fill="#a8a6a9"/><rect x="1073.61" y="344.5" width="2.77" height="36.5" fill="#a8a6a9"/><rect x="1076.38" y="351.0" width="1.60" height="30.0" fill="#a8a6a9"/><rect x="1077.98" y="362.9" width="1.01" height="18.1" fill="#a8a6a9"/><rect x="1078.94" y="349.6" width="2.77" height="31.4" fill="#a8a6a9"/><rect x="1081.72" y="354.3" width="1.60" height="26.7" fill="#a8a6a9"/><rect x="1083.32" y="362.1" width="1.01" height="18.9" fill="#a8a6a9"/><rect x="1084.28" y="351.1" width="2.77" height="29.9" fill="#a8a6a9"/><rect x="1087.05" y="355.3" width="1.60" height="25.7" fill="#a8a6a9"/><rect x="1088.65" y="362.7" width="1.01" height="18.3" fill="#a8a6a9"/><rect x="1089.61" y="340.6" width="2.77" height="40.4" fill="#a8a6a9"/><rect x="1092.39" y="348.5" width="1.60" height="32.5" fill="#a8a6a9"/><rect x="1093.99" y="363.3" width="1.01" height="17.7" fill="#a8a6a9"/><rect x="1094.95" y="337.4" width="2.77" height="43.6" fill="#a8a6a9"/><rect x="1097.72" y="346.4" width="1.60" height="34.6" fill="#a8a6a9"/><rect x="1099.32" y="363.8" width="1.01" height="17.2" fill="#a8a6a9"/><rect x="1100.28" y="331.8" width="2.77" height="49.2" fill="#a8a6a9"/><rect x="1103.06" y="342.7" width="1.60" height="38.3" fill="#a8a6a9"/><rect x="1104.66" y="363.5" width="1.01" height="17.5" fill="#a8a6a9"/><rect x="1105.62" y="326.9" width="2.77" height="54.1" fill="#a8a6a9"/><rect x="1108.39" y="339.5" width="1.60" height="41.5" fill="#a8a6a9"/><rect x="1109.99" y="361.2" width="1.01" height="19.8" fill="#a8a6a9"/><rect x="1110.95" y="322.9" width="2.77" height="58.1" fill="#a8a6a9"/><rect x="1113.73" y="336.9" width="1.60" height="44.1" fill="#a8a6a9"/><rect x="1115.33" y="364.1" width="1.01" height="16.9" fill="#a8a6a9"/><rect x="1116.29" y="318.7" width="2.77" height="62.3" fill="#a8a6a9"/><rect x="1119.06" y="334.2" width="1.60" height="46.8" fill="#a8a6a9"/><rect x="1120.66" y="364.2" width="1.01" height="16.8" fill="#a8a6a9"/><rect x="1121.62" y="332.4" width="2.77" height="48.6" fill="#a8a6a9"/><rect x="1124.40" y="343.1" width="1.60" height="37.9" fill="#a8a6a9"/><rect x="1126.00" y="362.6" width="1.01" height="18.4" fill="#a8a6a9"/><rect x="1126.96" y="337.2" width="2.77" height="43.8" fill="#a8a6a9"/><rect x="1129.73" y="346.2" width="1.60" height="34.8" fill="#a8a6a9"/><rect x="1131.33" y="363.5" width="1.01" height="17.5" fill="#a8a6a9"/><rect x="1132.29" y="338.8" width="2.77" height="42.2" fill="#a8a6a9"/><rect x="1135.07" y="347.2" width="1.60" height="33.8" fill="#a8a6a9"/><rect x="1136.67" y="361.3" width="1.01" height="19.7" fill="#a8a6a9"/><rect x="1137.63" y="337.1" width="2.77" height="43.9" fill="#a8a6a9"/><rect x="1140.40" y="346.1" width="1.60" height="34.9" fill="#a8a6a9"/><rect x="1142.01" y="361.6" width="1.01" height="19.4" fill="#a8a6a9"/><rect x="1142.97" y="336.5" width="2.77" height="44.5" fill="#a8a6a9"/><rect x="1145.74" y="345.8" width="1.60" height="35.2" fill="#a8a6a9"/><rect x="1147.34" y="361.2" width="1.01" height="19.8" fill="#a8a6a9"/><rect x="1148.30" y="335.5" width="2.77" height="45.5" fill="#a8a6a9"/><rect x="1151.08" y="345.1" width="1.60" height="35.9" fill="#a8a6a9"/><rect x="1152.68" y="361.6" width="1.01" height="19.4" fill="#a8a6a9"/><rect x="1153.64" y="336.9" width="2.77" height="44.1" fill="#a8a6a9"/><rect x="1156.41" y="346.0" width="1.60" height="35.0" fill="#a8a6a9"/><rect x="1158.01" y="362.5" width="1.01" height="18.5" fill="#a8a6a9"/><rect x="1158.97" y="338.3" width="2.77" height="42.7" fill="#a8a6a9"/><rect x="1161.75" y="346.9" width="1.60" height="34.1" fill="#a8a6a9"/><rect x="1163.35" y="364.5" width="1.01" height="16.5" fill="#a8a6a9"/><rect x="1164.31" y="342.5" width="2.77" height="38.5" fill="#a8a6a9"/><rect x="1167.08" y="349.7" width="1.60" height="31.3" fill="#a8a6a9"/><rect x="1168.68" y="361.6" width="1.01" height="19.4" fill="#a8a6a9"/><rect x="1169.64" y="344.1" width="2.77" height="36.9" fill="#a8a6a9"/><rect x="1172.42" y="350.7" width="1.60" height="30.3" fill="#a8a6a9"/><rect x="1174.02" y="362.4" width="1.01" height="18.6" fill="#a8a6a9"/><rect x="1174.98" y="342.1" width="2.77" height="38.9" fill="#a8a6a9"/><rect x="1177.75" y="349.4" width="1.60" height="31.6" fill="#a8a6a9"/><rect x="1179.35" y="361.5" width="1.01" height="19.5" fill="#a8a6a9"/><rect x="1180.31" y="341.0" width="2.77" height="40.0" fill="#a8a6a9"/><rect x="1183.09" y="348.7" width="1.60" height="32.3" fill="#a8a6a9"/><rect x="1184.69" y="365.0" width="1.01" height="16.0" fill="#a8a6a9"/><rect x="1185.65" y="338.2" width="2.77" height="42.8" fill="#a8a6a9"/><rect x="1188.42" y="346.9" width="1.60" height="34.1" fill="#a8a6a9"/><rect x="1190.02" y="362.9" width="1.01" height="18.1" fill="#a8a6a9"/><rect x="1190.98" y="336.2" width="2.77" height="44.8" fill="#a8a6a9"/><rect x="1193.76" y="345.5" width="1.60" height="35.5" fill="#a8a6a9"/><rect x="1195.36" y="361.4" width="1.01" height="19.6" fill="#a8a6a9"/><rect x="1196.32" y="339.1" width="2.77" height="41.9" fill="#a8a6a9"/><rect x="1199.09" y="347.4" width="1.60" height="33.6" fill="#a8a6a9"/><rect x="1200.69" y="362.1" width="1.01" height="18.9" fill="#a8a6a9"/><rect x="1201.65" y="342.1" width="2.77" height="38.9" fill="#a8a6a9"/><rect x="1204.43" y="349.4" width="1.60" height="31.6" fill="#a8a6a9"/><rect x="1206.03" y="361.6" width="1.01" height="19.4" fill="#a8a6a9"/><rect x="1206.99" y="340.0" width="2.77" height="41.0" fill="#a8a6a9"/><rect x="1209.76" y="348.1" width="1.60" height="32.9" fill="#a8a6a9"/><rect x="1211.37" y="364.8" width="1.01" height="16.2" fill="#a8a6a9"/><rect x="1212.33" y="341.9" width="2.77" height="39.1" fill="#a8a6a9"/><rect x="1215.10" y="349.3" width="1.60" height="31.7" fill="#a8a6a9"/><rect x="1216.70" y="361.6" width="1.01" height="19.4" fill="#a8a6a9"/><rect x="1217.66" y="342.0" width="2.77" height="39.0" fill="#a8a6a9"/><rect x="1220.44" y="349.3" width="1.60" height="31.7" fill="#a8a6a9"/><rect x="1222.04" y="361.1" width="1.01" height="19.9" fill="#a8a6a9"/><rect x="1223.00" y="341.6" width="2.77" height="39.4" fill="#a8a6a9"/><rect x="1225.77" y="349.1" width="1.60" height="31.9" fill="#a8a6a9"/><rect x="1227.37" y="364.9" width="1.01" height="16.1" fill="#a8a6a9"/><rect x="1228.33" y="342.2" width="2.77" height="38.8" fill="#a8a6a9"/><rect x="1231.11" y="349.5" width="1.60" height="31.5" fill="#a8a6a9"/><rect x="1232.71" y="363.8" width="1.01" height="17.2" fill="#a8a6a9"/><rect x="1233.67" y="340.3" width="2.77" height="40.7" fill="#a8a6a9"/><rect x="1236.44" y="348.2" width="1.60" height="32.8" fill="#a8a6a9"/><rect x="1238.04" y="362.5" width="1.01" height="18.5" fill="#a8a6a9"/><rect x="1239.00" y="340.0" width="2.77" height="41.0" fill="#a8a6a9"/><rect x="1241.78" y="348.1" width="1.60" height="32.9" fill="#a8a6a9"/><rect x="1243.38" y="364.1" width="1.01" height="16.9" fill="#a8a6a9"/><rect x="1244.34" y="341.1" width="2.77" height="39.9" fill="#a8a6a9"/><rect x="1247.11" y="348.8" width="1.60" height="32.2" fill="#a8a6a9"/><rect x="1248.71" y="364.1" width="1.01" height="16.9" fill="#a8a6a9"/><rect x="1249.67" y="340.2" width="2.77" height="40.8" fill="#a8a6a9"/><rect x="1252.45" y="348.2" width="1.60" height="32.8" fill="#a8a6a9"/><rect x="1254.05" y="361.9" width="1.01" height="19.1" fill="#a8a6a9"/><rect x="1255.01" y="341.3" width="2.77" height="39.7" fill="#a8a6a9"/><rect x="1257.78" y="348.9" width="1.60" height="32.1" fill="#a8a6a9"/><rect x="1259.38" y="364.9" width="1.01" height="16.1" fill="#a8a6a9"/><rect x="1260.34" y="341.1" width="2.77" height="39.9" fill="#a8a6a9"/><rect x="1263.12" y="348.7" width="1.60" height="32.3" fill="#a8a6a9"/><rect x="1264.72" y="364.2" width="1.01" height="16.8" fill="#a8a6a9"/><rect x="1265.68" y="341.0" width="2.77" height="40.0" fill="#a8a6a9"/><rect x="1268.45" y="348.7" width="1.60" height="32.3" fill="#a8a6a9"/><rect x="1270.05" y="364.0" width="1.01" height="17.0" fill="#a8a6a9"/><rect x="1271.02" y="339.0" width="2.77" height="42.0" fill="#a8a6a9"/><rect x="1273.79" y="347.4" width="1.60" height="33.6" fill="#a8a6a9"/><rect x="1275.39" y="363.1" width="1.01" height="17.9" fill="#a8a6a9"/><rect x="1276.35" y="338.3" width="2.77" height="42.7" fill="#a8a6a9"/><rect x="1279.13" y="346.9" width="1.60" height="34.1" fill="#a8a6a9"/><rect x="1280.73" y="361.1" width="1.01" height="19.9" fill="#a8a6a9"/><rect x="1281.69" y="336.2" width="2.77" height="44.8" fill="#a8a6a9"/><rect x="1284.46" y="345.6" width="1.60" height="35.4" fill="#a8a6a9"/><rect x="1286.06" y="362.1" width="1.01" height="18.9" fill="#a8a6a9"/><rect x="1287.02" y="335.9" width="2.77" height="45.1" fill="#a8a6a9"/><rect x="1289.80" y="345.4" width="1.60" height="35.6" fill="#a8a6a9"/><rect x="1291.40" y="363.8" width="1.01" height="17.2" fill="#a8a6a9"/><rect x="1292.36" y="336.2" width="2.77" height="44.8" fill="#a8a6a9"/><rect x="1295.13" y="345.6" width="1.60" height="35.4" fill="#a8a6a9"/><rect x="1296.73" y="362.8" width="1.01" height="18.2" fill="#a8a6a9"/><rect x="1297.69" y="333.5" width="2.77" height="47.5" fill="#a8a6a9"/><rect x="1300.47" y="343.8" width="1.60" height="37.2" fill="#a8a6a9"/><rect x="1302.07" y="365.0" width="1.01" height="16.0" fill="#a8a6a9"/><rect x="1303.03" y="329.9" width="2.77" height="51.1" fill="#a8a6a9"/><rect x="1305.80" y="341.5" width="1.60" height="39.5" fill="#a8a6a9"/><rect x="1307.40" y="362.5" width="1.01" height="18.5" fill="#a8a6a9"/><rect x="1308.36" y="329.5" width="2.77" height="51.5" fill="#a8a6a9"/><rect x="1311.14" y="341.2" width="1.60" height="39.8" fill="#a8a6a9"/><rect x="1312.74" y="361.9" width="1.01" height="19.1" fill="#a8a6a9"/><rect x="1313.70" y="326.0" width="2.77" height="55.0" fill="#a8a6a9"/><rect x="1316.47" y="339.0" width="1.60" height="42.0" fill="#a8a6a9"/><rect x="1318.07" y="361.8" width="1.01" height="19.2" fill="#a8a6a9"/><rect x="1319.03" y="322.3" width="2.77" height="58.7" fill="#a8a6a9"/><rect x="1321.81" y="336.5" width="1.60" height="44.5" fill="#a8a6a9"/><rect x="1323.41" y="364.6" width="1.01" height="16.4" fill="#a8a6a9"/><rect x="1324.37" y="327.5" width="2.77" height="53.5" fill="#a8a6a9"/><rect x="1327.14" y="339.9" width="1.60" height="41.1" fill="#a8a6a9"/><rect x="1328.74" y="362.9" width="1.01" height="18.1" fill="#a8a6a9"/><rect x="1329.70" y="331.2" width="2.77" height="49.8" fill="#a8a6a9"/><rect x="1332.48" y="342.3" width="1.60" height="38.7" fill="#a8a6a9"/><rect x="1334.08" y="364.2" width="1.01" height="16.8" fill="#a8a6a9"/><rect x="1335.04" y="331.3" width="2.77" height="49.7" fill="#a8a6a9"/><rect x="1337.81" y="342.4" width="1.60" height="38.6" fill="#a8a6a9"/><rect x="1339.42" y="363.6" width="1.01" height="17.4" fill="#a8a6a9"/><rect x="1340.38" y="335.4" width="2.77" height="45.6" fill="#a8a6a9"/><rect x="1343.15" y="345.0" width="1.60" height="36.0" fill="#a8a6a9"/><rect x="1344.75" y="364.1" width="1.01" height="16.9" fill="#a8a6a9"/><rect x="1345.71" y="337.0" width="2.77" height="44.0" fill="#a8a6a9"/><rect x="1348.49" y="346.1" width="1.60" height="34.9" fill="#a8a6a9"/><rect x="1350.09" y="362.9" width="1.01" height="18.1" fill="#a8a6a9"/><rect x="1351.05" y="338.6" width="2.77" height="42.4" fill="#a8a6a9"/><rect x="1353.82" y="347.1" width="1.60" height="33.9" fill="#a8a6a9"/><rect x="1355.42" y="364.2" width="1.01" height="16.8" fill="#a8a6a9"/><rect x="1356.38" y="347.1" width="2.77" height="33.9" fill="#a8a6a9"/><rect x="1359.16" y="352.7" width="1.60" height="28.3" fill="#a8a6a9"/><rect x="1360.76" y="364.2" width="1.01" height="16.8" fill="#a8a6a9"/><rect x="1361.72" y="357.9" width="2.77" height="23.1" fill="#a8a6a9"/><rect x="1364.49" y="359.7" width="1.60" height="21.3" fill="#a8a6a9"/><rect x="1366.09" y="362.6" width="1.01" height="18.4" fill="#a8a6a9"/><rect x="1367.05" y="343.2" width="2.77" height="37.8" fill="#a8a6a9"/><rect x="1369.83" y="350.2" width="1.60" height="30.8" fill="#a8a6a9"/><rect x="1371.43" y="364.8" width="1.01" height="16.2" fill="#a8a6a9"/><rect x="1372.39" y="338.5" width="2.77" height="42.5" fill="#a8a6a9"/><rect x="1375.16" y="347.1" width="1.60" height="33.9" fill="#a8a6a9"/><rect x="1376.76" y="361.7" width="1.01" height="19.3" fill="#a8a6a9"/><rect x="1377.72" y="334.1" width="2.77" height="46.9" fill="#a8a6a9"/><rect x="1380.50" y="344.2" width="1.60" height="36.8" fill="#a8a6a9"/><rect x="1382.10" y="361.6" width="1.01" height="19.4" fill="#a8a6a9"/><rect x="1383.06" y="334.8" width="2.77" height="46.2" fill="#a8a6a9"/><rect x="1385.83" y="344.7" width="1.60" height="36.3" fill="#a8a6a9"/><rect x="1387.43" y="364.2" width="1.01" height="16.8" fill="#a8a6a9"/><rect x="1388.39" y="328.5" width="2.77" height="52.5" fill="#a8a6a9"/><rect x="1391.17" y="340.6" width="1.60" height="40.4" fill="#a8a6a9"/><rect x="1392.77" y="364.3" width="1.01" height="16.7" fill="#a8a6a9"/><rect x="1393.73" y="325.7" width="2.77" height="55.3" fill="#a8a6a9"/><rect x="1396.50" y="338.8" width="1.60" height="42.2" fill="#a8a6a9"/><rect x="1398.10" y="363.6" width="1.01" height="17.4" fill="#a8a6a9"/><rect x="1399.06" y="330.3" width="2.77" height="50.7" fill="#a8a6a9"/><rect x="1401.84" y="341.7" width="1.60" height="39.3" fill="#a8a6a9"/><rect x="1403.44" y="363.2" width="1.01" height="17.8" fill="#a8a6a9"/><rect x="1404.40" y="334.4" width="2.77" height="46.6" fill="#a8a6a9"/><rect x="1407.17" y="344.4" width="1.60" height="36.6" fill="#a8a6a9"/><rect x="1408.78" y="361.1" width="1.01" height="19.9" fill="#a8a6a9"/><rect x="1409.74" y="341.2" width="2.77" height="39.8" fill="#a8a6a9"/><rect x="1412.51" y="348.8" width="1.60" height="32.2" fill="#a8a6a9"/><rect x="1414.11" y="363.6" width="1.01" height="17.4" fill="#a8a6a9"/><rect x="1415.07" y="339.1" width="2.77" height="41.9" fill="#a8a6a9"/><rect x="1417.85" y="347.4" width="1.60" height="33.6" fill="#a8a6a9"/><rect x="1419.45" y="364.7" width="1.01" height="16.3" fill="#a8a6a9"/><rect x="1420.41" y="337.9" width="2.77" height="43.1" fill="#a8a6a9"/><rect x="1423.18" y="346.7" width="1.60" height="34.3" fill="#a8a6a9"/><rect x="1424.78" y="364.5" width="1.01" height="16.5" fill="#a8a6a9"/><rect x="1425.74" y="340.1" width="2.77" height="40.9" fill="#a8a6a9"/><rect x="1428.52" y="348.1" width="1.60" height="32.9" fill="#a8a6a9"/><rect x="1430.12" y="361.8" width="1.01" height="19.2" fill="#a8a6a9"/><rect x="1431.08" y="338.9" width="2.77" height="42.1" fill="#a8a6a9"/><rect x="1433.85" y="347.4" width="1.60" height="33.6" fill="#a8a6a9"/><rect x="1435.45" y="362.2" width="1.01" height="18.8" fill="#a8a6a9"/><rect x="1436.41" y="337.3" width="2.77" height="43.7" fill="#a8a6a9"/><rect x="1439.19" y="346.3" width="1.60" height="34.7" fill="#a8a6a9"/><rect x="1440.79" y="363.3" width="1.01" height="17.7" fill="#a8a6a9"/><rect x="1441.75" y="336.1" width="2.77" height="44.9" fill="#a8a6a9"/><rect x="1444.52" y="345.5" width="1.60" height="35.5" fill="#a8a6a9"/><rect x="1446.12" y="362.7" width="1.01" height="18.3" fill="#a8a6a9"/><rect x="1447.08" y="335.2" width="2.77" height="45.8" fill="#a8a6a9"/><rect x="1449.86" y="344.9" width="1.60" height="36.1" fill="#a8a6a9"/><rect x="1451.46" y="364.6" width="1.01" height="16.4" fill="#a8a6a9"/><rect x="1452.42" y="337.3" width="2.77" height="43.7" fill="#a8a6a9"/><rect x="1455.19" y="346.3" width="1.60" height="34.7" fill="#a8a6a9"/><rect x="1456.79" y="362.8" width="1.01" height="18.2" fill="#a8a6a9"/><rect x="1457.75" y="341.7" width="2.77" height="39.3" fill="#a8a6a9"/><rect x="1460.53" y="349.1" width="1.60" height="31.9" fill="#a8a6a9"/><rect x="1462.13" y="364.6" width="1.01" height="16.4" fill="#a8a6a9"/><rect x="1463.09" y="341.2" width="2.77" height="39.8" fill="#a8a6a9"/><rect x="1465.86" y="348.8" width="1.60" height="32.2" fill="#a8a6a9"/><rect x="1467.46" y="364.7" width="1.01" height="16.3" fill="#a8a6a9"/><rect x="1468.42" y="338.8" width="2.77" height="42.2" fill="#a8a6a9"/><rect x="1471.20" y="347.3" width="1.60" height="33.7" fill="#a8a6a9"/><rect x="1472.80" y="363.1" width="1.01" height="17.9" fill="#a8a6a9"/><rect x="1473.76" y="338.4" width="2.77" height="42.6" fill="#a8a6a9"/><rect x="1476.53" y="347.0" width="1.60" height="34.0" fill="#a8a6a9"/><rect x="1478.14" y="361.1" width="1.01" height="19.9" fill="#a8a6a9"/><rect x="1479.10" y="338.7" width="2.77" height="42.3" fill="#a8a6a9"/><rect x="1481.87" y="347.2" width="1.60" height="33.8" fill="#a8a6a9"/><rect x="1483.47" y="361.7" width="1.01" height="19.3" fill="#a8a6a9"/><rect x="1484.43" y="338.8" width="2.77" height="42.2" fill="#a8a6a9"/><rect x="1487.21" y="347.3" width="1.60" height="33.7" fill="#a8a6a9"/><rect x="1488.81" y="364.2" width="1.01" height="16.8" fill="#a8a6a9"/><rect x="1489.77" y="340.9" width="2.77" height="40.1" fill="#a8a6a9"/><rect x="1492.54" y="348.7" width="1.60" height="32.3" fill="#a8a6a9"/><rect x="1494.14" y="362.9" width="1.01" height="18.1" fill="#a8a6a9"/><rect x="1495.10" y="343.2" width="2.77" height="37.8" fill="#a8a6a9"/><rect x="1497.88" y="350.1" width="1.60" height="30.9" fill="#a8a6a9"/><rect x="1499.48" y="363.2" width="1.01" height="17.8" fill="#a8a6a9"/><rect x="1500.44" y="342.5" width="2.77" height="38.5" fill="#a8a6a9"/><rect x="1503.21" y="349.7" width="1.60" height="31.3" fill="#a8a6a9"/><rect x="1504.81" y="363.1" width="1.01" height="17.9" fill="#a8a6a9"/><rect x="1505.77" y="343.7" width="2.77" height="37.3" fill="#a8a6a9"/><rect x="1508.55" y="350.5" width="1.60" height="30.5" fill="#a8a6a9"/><rect x="1510.15" y="364.1" width="1.01" height="16.9" fill="#a8a6a9"/><rect x="1511.11" y="342.7" width="2.77" height="38.3" fill="#a8a6a9"/><rect x="1513.88" y="349.8" width="1.60" height="31.2" fill="#a8a6a9"/><rect x="1515.48" y="363.2" width="1.01" height="17.8" fill="#a8a6a9"/><rect x="1516.44" y="342.6" width="2.77" height="38.4" fill="#a8a6a9"/><rect x="1519.22" y="349.7" width="1.60" height="31.3" fill="#a8a6a9"/><rect x="1520.82" y="362.1" width="1.01" height="18.9" fill="#a8a6a9"/><rect x="1521.78" y="344.4" width="2.77" height="36.6" fill="#a8a6a9"/><rect x="1524.55" y="350.9" width="1.60" height="30.1" fill="#a8a6a9"/><rect x="1526.15" y="363.0" width="1.01" height="18.0" fill="#a8a6a9"/><rect x="1527.11" y="345.3" width="2.77" height="35.7" fill="#a8a6a9"/><rect x="1529.89" y="351.5" width="1.60" height="29.5" fill="#a8a6a9"/><rect x="1531.49" y="364.0" width="1.01" height="17.0" fill="#a8a6a9"/><rect x="1532.45" y="347.4" width="2.77" height="33.6" fill="#a8a6a9"/><rect x="1535.22" y="352.9" width="1.60" height="28.1" fill="#a8a6a9"/><rect x="1536.82" y="362.8" width="1.01" height="18.2" fill="#a8a6a9"/><rect x="1537.79" y="346.9" width="2.77" height="34.1" fill="#a8a6a9"/><rect x="1540.56" y="352.5" width="1.60" height="28.5" fill="#a8a6a9"/><rect x="1542.16" y="363.0" width="1.01" height="18.0" fill="#a8a6a9"/><rect x="1543.12" y="346.9" width="2.77" height="34.1" fill="#a8a6a9"/><rect x="1545.90" y="352.5" width="1.60" height="28.5" fill="#a8a6a9"/><rect x="1547.50" y="363.8" width="1.01" height="17.2" fill="#a8a6a9"/><rect x="1548.46" y="345.8" width="2.77" height="35.2" fill="#a8a6a9"/><rect x="1551.23" y="351.8" width="1.60" height="29.2" fill="#a8a6a9"/><rect x="1552.83" y="363.1" width="1.01" height="17.9" fill="#a8a6a9"/><rect x="1553.79" y="344.3" width="2.77" height="36.7" fill="#a8a6a9"/><rect x="1556.57" y="350.8" width="1.60" height="30.2" fill="#a8a6a9"/><rect x="1558.17" y="364.8" width="1.01" height="16.2" fill="#a8a6a9"/><rect x="1559.13" y="342.2" width="2.77" height="38.8" fill="#a8a6a9"/><rect x="1561.90" y="349.5" width="1.60" height="31.5" fill="#a8a6a9"/><rect x="1563.50" y="364.5" width="1.01" height="16.5" fill="#a8a6a9"/><rect x="1564.46" y="341.7" width="2.77" height="39.3" fill="#a8a6a9"/><rect x="1567.24" y="349.2" width="1.60" height="31.8" fill="#a8a6a9"/><rect x="1568.84" y="362.0" width="1.01" height="19.0" fill="#a8a6a9"/><rect x="1569.80" y="341.4" width="2.77" height="39.6" fill="#a8a6a9"/><rect x="1572.57" y="348.9" width="1.60" height="32.1" fill="#a8a6a9"/><rect x="1574.17" y="364.8" width="1.01" height="16.2" fill="#a8a6a9"/><rect x="1575.13" y="343.1" width="2.77" height="37.9" fill="#a8a6a9"/><rect x="1577.91" y="350.0" width="1.60" height="31.0" fill="#a8a6a9"/><rect x="1579.51" y="361.5" width="1.01" height="19.5" fill="#a8a6a9"/><rect x="1580.47" y="342.4" width="2.77" height="38.6" fill="#a8a6a9"/><rect x="1583.24" y="349.6" width="1.60" height="31.4" fill="#a8a6a9"/><rect x="1584.84" y="362.8" width="1.01" height="18.2" fill="#a8a6a9"/><rect x="1585.80" y="339.4" width="2.77" height="41.6" fill="#a8a6a9"/><rect x="1588.58" y="347.7" width="1.60" height="33.3" fill="#a8a6a9"/><rect x="1590.18" y="362.0" width="1.01" height="19.0" fill="#a8a6a9"/><rect x="1591.14" y="335.9" width="2.77" height="45.1" fill="#a8a6a9"/><rect x="1593.91" y="345.4" width="1.60" height="35.6" fill="#a8a6a9"/><rect x="1595.51" y="363.7" width="1.01" height="17.3" fill="#a8a6a9"/><rect x="1596.47" y="338.8" width="2.77" height="42.2" fill="#a8a6a9"/><rect x="1599.25" y="347.3" width="1.60" height="33.7" fill="#a8a6a9"/><rect x="1600.85" y="364.6" width="1.01" height="16.4" fill="#a8a6a9"/><rect x="1601.81" y="335.4" width="2.77" height="45.6" fill="#a8a6a9"/><rect x="1604.58" y="345.0" width="1.60" height="36.0" fill="#a8a6a9"/><rect x="1606.19" y="363.9" width="1.01" height="17.1" fill="#a8a6a9"/><rect x="1607.15" y="334.9" width="2.77" height="46.1" fill="#a8a6a9"/><rect x="1609.92" y="344.7" width="1.60" height="36.3" fill="#a8a6a9"/><rect x="1611.52" y="361.6" width="1.01" height="19.4" fill="#a8a6a9"/><rect x="1612.48" y="333.5" width="2.77" height="47.5" fill="#a8a6a9"/><rect x="1615.26" y="343.9" width="1.60" height="37.1" fill="#a8a6a9"/><rect x="1616.86" y="364.9" width="1.01" height="16.1" fill="#a8a6a9"/><rect x="1617.82" y="336.0" width="2.77" height="45.0" fill="#a8a6a9"/><rect x="1620.59" y="345.5" width="1.60" height="35.5" fill="#a8a6a9"/><rect x="1622.19" y="364.8" width="1.01" height="16.2" fill="#a8a6a9"/><rect x="1623.15" y="340.1" width="2.77" height="40.9" fill="#a8a6a9"/><rect x="1625.93" y="348.1" width="1.60" height="32.9" fill="#a8a6a9"/><rect x="1627.53" y="362.9" width="1.01" height="18.1" fill="#a8a6a9"/><rect x="1628.49" y="349.9" width="2.77" height="31.1" fill="#a8a6a9"/><rect x="1631.26" y="354.5" width="1.60" height="26.5" fill="#a8a6a9"/><rect x="1632.86" y="364.3" width="1.01" height="16.7" fill="#a8a6a9"/><rect x="1633.82" y="358.3" width="2.77" height="22.7" fill="#a8a6a9"/><rect x="1636.60" y="359.9" width="1.60" height="21.1" fill="#a8a6a9"/><rect x="1638.20" y="362.7" width="1.01" height="18.3" fill="#a8a6a9"/><rect x="1639.16" y="357.2" width="2.77" height="23.8" fill="#a8a6a9"/><rect x="1641.93" y="359.2" width="1.60" height="21.8" fill="#a8a6a9"/><rect x="1643.53" y="362.4" width="1.01" height="18.6" fill="#a8a6a9"/><rect x="1644.49" y="346.8" width="2.77" height="34.2" fill="#a8a6a9"/><rect x="1647.27" y="352.4" width="1.60" height="28.6" fill="#a8a6a9"/><rect x="1648.87" y="362.3" width="1.01" height="18.7" fill="#a8a6a9"/><rect x="1649.83" y="342.6" width="2.77" height="38.4" fill="#a8a6a9"/><rect x="1652.60" y="349.8" width="1.60" height="31.2" fill="#a8a6a9"/><rect x="1654.20" y="361.1" width="1.01" height="19.9" fill="#a8a6a9"/><rect x="1655.16" y="339.1" width="2.77" height="41.9" fill="#a8a6a9"/><rect x="1657.94" y="347.4" width="1.60" height="33.6" fill="#a8a6a9"/><rect x="1659.54" y="362.8" width="1.01" height="18.2" fill="#a8a6a9"/><rect x="1660.50" y="334.3" width="2.77" height="46.7" fill="#a8a6a9"/><rect x="1663.27" y="344.3" width="1.60" height="36.7" fill="#a8a6a9"/><rect x="1664.87" y="362.3" width="1.01" height="18.7" fill="#a8a6a9"/><rect x="1665.83" y="333.6" width="2.77" height="47.4" fill="#a8a6a9"/><rect x="1668.61" y="343.9" width="1.60" height="37.1" fill="#a8a6a9"/><rect x="1670.21" y="363.0" width="1.01" height="18.0" fill="#a8a6a9"/><rect x="1671.17" y="333.5" width="2.77" height="47.5" fill="#a8a6a9"/><rect x="1673.94" y="343.8" width="1.60" height="37.2" fill="#a8a6a9"/><rect x="1675.55" y="364.9" width="1.01" height="16.1" fill="#a8a6a9"/><rect x="1676.51" y="340.9" width="2.77" height="40.1" fill="#a8a6a9"/><rect x="1679.28" y="348.7" width="1.60" height="32.3" fill="#a8a6a9"/><rect x="1680.88" y="364.9" width="1.01" height="16.1" fill="#a8a6a9"/><rect x="1681.84" y="342.3" width="2.77" height="38.7" fill="#a8a6a9"/><rect x="1684.62" y="349.5" width="1.60" height="31.5" fill="#a8a6a9"/><rect x="1686.22" y="362.1" width="1.01" height="18.9" fill="#a8a6a9"/><rect x="1687.18" y="340.5" width="2.77" height="40.5" fill="#a8a6a9"/><rect x="1689.95" y="348.4" width="1.60" height="32.6" fill="#a8a6a9"/><rect x="1691.55" y="364.1" width="1.01" height="16.9" fill="#a8a6a9"/><rect x="1692.51" y="340.6" width="2.77" height="40.4" fill="#a8a6a9"/><rect x="1695.29" y="348.4" width="1.60" height="32.6" fill="#a8a6a9"/><rect x="1696.89" y="361.5" width="1.01" height="19.5" fill="#a8a6a9"/><rect x="1697.85" y="341.6" width="2.77" height="39.4" fill="#a8a6a9"/><rect x="1700.62" y="349.1" width="1.60" height="31.9" fill="#a8a6a9"/><rect x="1702.22" y="364.6" width="1.01" height="16.4" fill="#a8a6a9"/><rect x="1703.18" y="344.2" width="2.77" height="36.8" fill="#a8a6a9"/><rect x="1705.96" y="350.8" width="1.60" height="30.2" fill="#a8a6a9"/><rect x="1707.56" y="362.0" width="1.01" height="19.0" fill="#a8a6a9"/><rect x="1708.52" y="344.4" width="2.77" height="36.6" fill="#a8a6a9"/><rect x="1711.29" y="350.9" width="1.60" height="30.1" fill="#a8a6a9"/><rect x="1712.89" y="364.7" width="1.01" height="16.3" fill="#a8a6a9"/><rect x="1713.85" y="345.1" width="2.77" height="35.9" fill="#a8a6a9"/><rect x="1716.63" y="351.3" width="1.60" height="29.7" fill="#a8a6a9"/><rect x="1718.23" y="363.8" width="1.01" height="17.2" fill="#a8a6a9"/><rect x="1719.19" y="342.0" width="2.77" height="39.0" fill="#a8a6a9"/><rect x="1721.96" y="349.4" width="1.60" height="31.6" fill="#a8a6a9"/><rect x="1723.56" y="361.2" width="1.01" height="19.8" fill="#a8a6a9"/><rect x="1724.52" y="344.5" width="2.77" height="36.5" fill="#a8a6a9"/><rect x="1727.30" y="351.0" width="1.60" height="30.0" fill="#a8a6a9"/><rect x="1728.90" y="362.7" width="1.01" height="18.3" fill="#a8a6a9"/><rect x="1729.86" y="343.7" width="2.77" height="37.3" fill="#a8a6a9"/><rect x="1732.63" y="350.4" width="1.60" height="30.6" fill="#a8a6a9"/><rect x="1734.23" y="364.8" width="1.01" height="16.2" fill="#a8a6a9"/><rect x="1735.19" y="343.3" width="2.77" height="37.7" fill="#a8a6a9"/><rect x="1737.97" y="350.2" width="1.60" height="30.8" fill="#a8a6a9"/><rect x="1739.57" y="364.2" width="1.01" height="16.8" fill="#a8a6a9"/><rect x="1740.53" y="340.0" width="2.77" height="41.0" fill="#a8a6a9"/><rect x="1743.30" y="348.1" width="1.60" height="32.9" fill="#a8a6a9"/><rect x="1744.91" y="364.4" width="1.01" height="16.6" fill="#a8a6a9"/><rect x="1745.87" y="342.6" width="2.77" height="38.4" fill="#a8a6a9"/><rect x="1748.64" y="349.8" width="1.60" height="31.2" fill="#a8a6a9"/><rect x="1750.24" y="364.5" width="1.01" height="16.5" fill="#a8a6a9"/><rect x="1751.20" y="345.0" width="2.77" height="36.0" fill="#a8a6a9"/><rect x="1753.98" y="351.3" width="1.60" height="29.7" fill="#a8a6a9"/><rect x="1755.58" y="362.4" width="1.01" height="18.6" fill="#a8a6a9"/><rect x="1756.54" y="341.3" width="2.77" height="39.7" fill="#a8a6a9"/><rect x="1759.31" y="348.9" width="1.60" height="32.1" fill="#a8a6a9"/><rect x="1760.91" y="364.7" width="1.01" height="16.3" fill="#a8a6a9"/><rect x="1761.87" y="336.4" width="2.77" height="44.6" fill="#a8a6a9"/><rect x="1764.65" y="345.7" width="1.60" height="35.3" fill="#a8a6a9"/><rect x="1766.25" y="361.5" width="1.01" height="19.5" fill="#a8a6a9"/><rect x="1767.21" y="335.4" width="2.77" height="45.6" fill="#a8a6a9"/><rect x="1769.98" y="345.1" width="1.60" height="35.9" fill="#a8a6a9"/><rect x="1771.58" y="362.0" width="1.01" height="19.0" fill="#a8a6a9"/><rect x="1772.54" y="340.1" width="2.77" height="40.9" fill="#a8a6a9"/><rect x="1775.32" y="348.1" width="1.60" height="32.9" fill="#a8a6a9"/><rect x="1776.92" y="361.6" width="1.01" height="19.4" fill="#a8a6a9"/><rect x="1777.88" y="343.2" width="2.77" height="37.8" fill="#a8a6a9"/><rect x="1780.65" y="350.1" width="1.60" height="30.9" fill="#a8a6a9"/><rect x="1782.25" y="361.8" width="1.01" height="19.2" fill="#a8a6a9"/><rect x="1783.21" y="345.1" width="2.77" height="35.9" fill="#a8a6a9"/><rect x="1785.99" y="351.4" width="1.60" height="29.6" fill="#a8a6a9"/><rect x="1787.59" y="362.2" width="1.01" height="18.8" fill="#a8a6a9"/><rect x="1788.55" y="347.5" width="2.77" height="33.5" fill="#a8a6a9"/><rect x="1791.32" y="352.9" width="1.60" height="28.1" fill="#a8a6a9"/><rect x="1792.92" y="362.2" width="1.01" height="18.8" fill="#a8a6a9"/><rect x="1793.88" y="346.8" width="2.77" height="34.2" fill="#a8a6a9"/><rect x="1796.66" y="352.5" width="1.60" height="28.5" fill="#a8a6a9"/><rect x="1798.26" y="361.7" width="1.01" height="19.3" fill="#a8a6a9"/><rect x="1799.22" y="346.1" width="2.77" height="34.9" fill="#a8a6a9"/><rect x="1801.99" y="352.0" width="1.60" height="29.0" fill="#a8a6a9"/><rect x="1803.59" y="361.1" width="1.01" height="19.9" fill="#a8a6a9"/><rect x="1804.56" y="345.5" width="2.77" height="35.5" fill="#a8a6a9"/><rect x="1807.33" y="351.6" width="1.60" height="29.4" fill="#a8a6a9"/><rect x="1808.93" y="361.1" width="1.01" height="19.9" fill="#a8a6a9"/><rect x="1809.89" y="346.7" width="2.77" height="34.3" fill="#a8a6a9"/><rect x="1812.67" y="352.4" width="1.60" height="28.6" fill="#a8a6a9"/><rect x="1814.27" y="363.2" width="1.01" height="17.8" fill="#a8a6a9"/><rect x="1815.23" y="345.1" width="2.77" height="35.9" fill="#a8a6a9"/><rect x="1818.00" y="351.3" width="1.60" height="29.7" fill="#a8a6a9"/><rect x="1819.60" y="362.9" width="1.01" height="18.1" fill="#a8a6a9"/><rect x="1820.56" y="347.3" width="2.77" height="33.7" fill="#a8a6a9"/><rect x="1823.34" y="352.8" width="1.60" height="28.2" fill="#a8a6a9"/><rect x="1824.94" y="361.4" width="1.01" height="19.6" fill="#a8a6a9"/><rect x="1825.90" y="347.0" width="2.77" height="34.0" fill="#a8a6a9"/><rect x="1828.67" y="352.6" width="1.60" height="28.4" fill="#a8a6a9"/><rect x="1830.27" y="362.7" width="1.01" height="18.3" fill="#a8a6a9"/><rect x="1831.23" y="345.5" width="2.77" height="35.5" fill="#a8a6a9"/><rect x="1834.01" y="351.6" width="1.60" height="29.4" fill="#a8a6a9"/><rect x="1835.61" y="364.3" width="1.01" height="16.7" fill="#a8a6a9"/><rect x="1836.57" y="343.1" width="2.77" height="37.9" fill="#a8a6a9"/><rect x="1839.34" y="350.0" width="1.60" height="31.0" fill="#a8a6a9"/><rect x="1840.94" y="363.0" width="1.01" height="18.0" fill="#a8a6a9"/><rect x="1841.90" y="341.8" width="2.77" height="39.2" fill="#a8a6a9"/><rect x="1844.68" y="349.2" width="1.60" height="31.8" fill="#a8a6a9"/><rect x="1846.28" y="364.9" width="1.01" height="16.1" fill="#a8a6a9"/><rect x="1847.24" y="339.8" width="2.77" height="41.2" fill="#a8a6a9"/><rect x="1850.01" y="347.9" width="1.60" height="33.1" fill="#a8a6a9"/><rect x="1851.61" y="364.3" width="1.01" height="16.7" fill="#a8a6a9"/><rect x="1852.57" y="341.5" width="2.77" height="39.5" fill="#a8a6a9"/><rect x="1855.35" y="349.0" width="1.60" height="32.0" fill="#a8a6a9"/><rect x="1856.95" y="363.5" width="1.01" height="17.5" fill="#a8a6a9"/><rect x="1857.91" y="341.2" width="2.77" height="39.8" fill="#a8a6a9"/><rect x="1860.68" y="348.9" width="1.60" height="32.1" fill="#a8a6a9"/><rect x="1862.28" y="362.4" width="1.01" height="18.6" fill="#a8a6a9"/><rect x="1584" y="328" width="5" height="53" fill="#fbf9fc"/><rect x="1601" y="328" width="3" height="53" fill="#fbf9fc"/><rect x="1566" y="322" width="4" height="59" fill="#a8a6a9"/><rect x="1569" y="316" width="2" height="65" fill="#a8a6a9"/><rect x="1613" y="310" width="3" height="71" fill="#a8a6a9"/><rect x="1612" y="333" width="5" height="48" fill="#a8a6a9"/><rect x="1332" y="312" width="3" height="69" fill="#a8a6a9"/><line x1="1333" y1="286" x2="1333" y2="381" stroke="#a4a2a6" stroke-width="1"/><line x1="1334.5" y1="291" x2="1334.5" y2="381" stroke="#a4a2a6" stroke-width="1"/><line x1="1567.5" y1="305" x2="1567.5" y2="381" stroke="#a4a2a6" stroke-width="1"/><line x1="1570" y1="308" x2="1570" y2="381" stroke="#a4a2a6" stroke-width="1"/><line x1="1589.5" y1="215" x2="1589.5" y2="381" stroke="#a4a2a6" stroke-width="1"/><line x1="1604.5" y1="195" x2="1604.5" y2="381" stroke="#a4a2a6" stroke-width="1"/><line x1="1614" y1="287" x2="1614" y2="381" stroke="#a4a2a6" stroke-width="1"/><rect x="1862.00" y="341.3" width="4.27" height="39.7" fill="#f4a8ae"/><rect x="1866.27" y="359" width="1.12" height="22" fill="#f4a8ae"/><rect x="1867.34" y="341.8" width="4.27" height="39.2" fill="#f4a8ae"/><rect x="1871.60" y="359" width="1.12" height="22" fill="#f4a8ae"/><rect x="1872.67" y="341.4" width="4.27" height="39.6" fill="#f4a8ae"/><rect x="1876.94" y="359" width="1.12" height="22" fill="#f4a8ae"/><rect x="1878.01" y="345.4" width="4.27" height="35.6" fill="#f4a8ae"/><rect x="1882.27" y="359" width="1.12" height="22" fill="#f4a8ae"/><rect x="1883.34" y="342.5" width="0.66" height="38.5" fill="#f4a8ae"/><rect x="1887.61" y="359" width="0.00" height="22" fill="#f4a8ae"/></svg><div class="t" style="right:1109px;top:374.36px;font-size:16px;color:#303030">0</div><div class="t" style="right:1109px;top:319.81px;font-size:16px;color:#303030">100</div><div class="t" style="right:1109px;top:265.26px;font-size:16px;color:#303030">200</div><div class="t" style="right:1109px;top:210.71px;font-size:16px;color:#303030">300</div><div class="t" style="right:1109px;top:156.16px;font-size:16px;color:#303030">400</div><div class="t" style="left:802.40px;top:469.6px;font-size:16px;color:#303030;letter-spacing:-0.1px;transform-origin:0 0;transform:rotate(-90deg) translate(0,-7.5px)">27.12.2021</div><div class="t" style="left:822.93px;top:469.6px;font-size:16px;color:#303030;letter-spacing:-0.1px;transform-origin:0 0;transform:rotate(-90deg) translate(0,-7.5px)">23.01.2022</div><div class="t" style="left:843.47px;top:469.6px;font-size:16px;color:#303030;letter-spacing:-0.1px;transform-origin:0 0;transform:rotate(-90deg) translate(0,-7.5px)">19.02.2022</div><div class="t" style="left:864.00px;top:469.6px;font-size:16px;color:#303030;letter-spacing:-0.1px;transform-origin:0 0;transform:rotate(-90deg) translate(0,-7.5px)">18.03.2022</div><div class="t" style="left:884.54px;top:469.6px;font-size:16px;color:#303030;letter-spacing:-0.1px;transform-origin:0 0;transform:rotate(-90deg) translate(0,-7.5px)">14.04.2022</div><div class="t" style="left:905.07px;top:469.6px;font-size:16px;color:#303030;letter-spacing:-0.1px;transform-origin:0 0;transform:rotate(-90deg) translate(0,-7.5px)">11.05.2022</div><div class="t" style="left:925.61px;top:469.6px;font-size:16px;color:#303030;letter-spacing:-0.1px;transform-origin:0 0;transform:rotate(-90deg) translate(0,-7.5px)">07.06.2022</div><div class="t" style="left:946.14px;top:469.6px;font-size:16px;color:#303030;letter-spacing:-0.1px;transform-origin:0 0;transform:rotate(-90deg) translate(0,-7.5px)">04.07.2022</div><div class="t" style="left:966.68px;top:469.6px;font-size:16px;color:#303030;letter-spacing:-0.1px;transform-origin:0 0;transform:rotate(-90deg) translate(0,-7.5px)">31.07.2022</div><div class="t" style="left:987.21px;top:469.6px;font-size:16px;color:#303030;letter-spacing:-0.1px;transform-origin:0 0;transform:rotate(-90deg) translate(0,-7.5px)">27.08.2022</div><div class="t" style="left:1007.75px;top:469.6px;font-size:16px;color:#303030;letter-spacing:-0.1px;transform-origin:0 0;transform:rotate(-90deg) translate(0,-7.5px)">23.09.2022</div><div class="t" style="left:1028.28px;top:469.6px;font-size:16px;color:#303030;letter-spacing:-0.1px;transform-origin:0 0;transform:rotate(-90deg) translate(0,-7.5px)">20.10.2022</div><div class="t" style="left:1048.82px;top:469.6px;font-size:16px;color:#303030;letter-spacing:-0.1px;transform-origin:0 0;transform:rotate(-90deg) translate(0,-7.5px)">16.11.2022</div><div class="t" style="left:1069.36px;top:469.6px;font-size:16px;color:#303030;letter-spacing:-0.1px;transform-origin:0 0;transform:rotate(-90deg) translate(0,-7.5px)">13.12.2022</div><div class="t" style="left:1089.89px;top:469.6px;font-size:16px;color:#303030;letter-spacing:-0.1px;transform-origin:0 0;transform:rotate(-90deg) translate(0,-7.5px)">09.01.2023</div><div class="t" style="left:1110.42px;top:469.6px;font-size:16px;color:#303030;letter-spacing:-0.1px;transform-origin:0 0;transform:rotate(-90deg) translate(0,-7.5px)">05.02.2023</div><div class="t" style="left:1130.96px;top:469.6px;font-size:16px;color:#303030;letter-spacing:-0.1px;transform-origin:0 0;transform:rotate(-90deg) translate(0,-7.5px)">04.03.2023</div><div class="t" style="left:1151.49px;top:469.6px;font-size:16px;color:#303030;letter-spacing:-0.1px;transform-origin:0 0;transform:rotate(-90deg) translate(0,-7.5px)">31.03.2023</div><div class="t" style="left:1172.03px;top:469.6px;font-size:16px;color:#303030;letter-spacing:-0.1px;transform-origin:0 0;transform:rotate(-90deg) translate(0,-7.5px)">27.04.2023</div><div class="t" style="left:1192.57px;top:469.6px;font-size:16px;color:#303030;letter-spacing:-0.1px;transform-origin:0 0;transform:rotate(-90deg) translate(0,-7.5px)">24.05.2023</div><div class="t" style="left:1213.10px;top:469.6px;font-size:16px;color:#303030;letter-spacing:-0.1px;transform-origin:0 0;transform:rotate(-90deg) translate(0,-7.5px)">20.06.2023</div><div class="t" style="left:1233.63px;top:469.6px;font-size:16px;color:#303030;letter-spacing:-0.1px;transform-origin:0 0;transform:rotate(-90deg) translate(0,-7.5px)">17.07.2023</div><div class="t" style="left:1254.17px;top:469.6px;font-size:16px;color:#303030;letter-spacing:-0.1px;transform-origin:0 0;transform:rotate(-90deg) translate(0,-7.5px)">13.08.2023</div><div class="t" style="left:1274.70px;top:469.6px;font-size:16px;color:#303030;letter-spacing:-0.1px;transform-origin:0 0;transform:rotate(-90deg) translate(0,-7.5px)">09.09.2023</div><div class="t" style="left:1295.24px;top:469.6px;font-size:16px;color:#303030;letter-spacing:-0.1px;transform-origin:0 0;transform:rotate(-90deg) translate(0,-7.5px)">06.10.2023</div><div class="t" style="left:1315.78px;top:469.6px;font-size:16px;color:#303030;letter-spacing:-0.1px;transform-origin:0 0;transform:rotate(-90deg) translate(0,-7.5px)">02.11.2023</div><div class="t" style="left:1336.31px;top:469.6px;font-size:16px;color:#303030;letter-spacing:-0.1px;transform-origin:0 0;transform:rotate(-90deg) translate(0,-7.5px)">29.11.2023</div><div class="t" style="left:1356.85px;top:469.6px;font-size:16px;color:#303030;letter-spacing:-0.1px;transform-origin:0 0;transform:rotate(-90deg) translate(0,-7.5px)">26.12.2023</div><div class="t" style="left:1377.38px;top:469.6px;font-size:16px;color:#303030;letter-spacing:-0.1px;transform-origin:0 0;transform:rotate(-90deg) translate(0,-7.5px)">22.01.2024</div><div class="t" style="left:1397.91px;top:469.6px;font-size:16px;color:#303030;letter-spacing:-0.1px;transform-origin:0 0;transform:rotate(-90deg) translate(0,-7.5px)">18.02.2024</div><div class="t" style="left:1418.45px;top:469.6px;font-size:16px;color:#303030;letter-spacing:-0.1px;transform-origin:0 0;transform:rotate(-90deg) translate(0,-7.5px)">16.03.2024</div><div class="t" style="left:1438.99px;top:469.6px;font-size:16px;color:#303030;letter-spacing:-0.1px;transform-origin:0 0;transform:rotate(-90deg) translate(0,-7.5px)">12.04.2024</div><div class="t" style="left:1459.52px;top:469.6px;font-size:16px;color:#303030;letter-spacing:-0.1px;transform-origin:0 0;transform:rotate(-90deg) translate(0,-7.5px)">09.05.2024</div><div class="t" style="left:1480.05px;top:469.6px;font-size:16px;color:#303030;letter-spacing:-0.1px;transform-origin:0 0;transform:rotate(-90deg) translate(0,-7.5px)">05.06.2024</div><div class="t" style="left:1500.59px;top:469.6px;font-size:16px;color:#303030;letter-spacing:-0.1px;transform-origin:0 0;transform:rotate(-90deg) translate(0,-7.5px)">02.07.2024</div><div class="t" style="left:1521.12px;top:469.6px;font-size:16px;color:#303030;letter-spacing:-0.1px;transform-origin:0 0;transform:rotate(-90deg) translate(0,-7.5px)">29.07.2024</div><div class="t" style="left:1541.66px;top:469.6px;font-size:16px;color:#303030;letter-spacing:-0.1px;transform-origin:0 0;transform:rotate(-90deg) translate(0,-7.5px)">25.08.2024</div><div class="t" style="left:1562.19px;top:469.6px;font-size:16px;color:#303030;letter-spacing:-0.1px;transform-origin:0 0;transform:rotate(-90deg) translate(0,-7.5px)">21.09.2024</div><div class="t" style="left:1582.73px;top:469.6px;font-size:16px;color:#303030;letter-spacing:-0.1px;transform-origin:0 0;transform:rotate(-90deg) translate(0,-7.5px)">18.10.2024</div><div class="t" style="left:1603.26px;top:469.6px;font-size:16px;color:#303030;letter-spacing:-0.1px;transform-origin:0 0;transform:rotate(-90deg) translate(0,-7.5px)">14.11.2024</div><div class="t" style="left:1623.80px;top:469.6px;font-size:16px;color:#303030;letter-spacing:-0.1px;transform-origin:0 0;transform:rotate(-90deg) translate(0,-7.5px)">11.12.2024</div><div class="t" style="left:1644.34px;top:469.6px;font-size:16px;color:#303030;letter-spacing:-0.1px;transform-origin:0 0;transform:rotate(-90deg) translate(0,-7.5px)">07.01.2025</div><div class="t" style="left:1664.87px;top:469.6px;font-size:16px;color:#303030;letter-spacing:-0.1px;transform-origin:0 0;transform:rotate(-90deg) translate(0,-7.5px)">03.02.2025</div><div class="t" style="left:1685.40px;top:469.6px;font-size:16px;color:#303030;letter-spacing:-0.1px;transform-origin:0 0;transform:rotate(-90deg) translate(0,-7.5px)">02.03.2025</div><div class="t" style="left:1705.94px;top:469.6px;font-size:16px;color:#303030;letter-spacing:-0.1px;transform-origin:0 0;transform:rotate(-90deg) translate(0,-7.5px)">29.03.2025</div><div class="t" style="left:1726.47px;top:469.6px;font-size:16px;color:#303030;letter-spacing:-0.1px;transform-origin:0 0;transform:rotate(-90deg) translate(0,-7.5px)">25.04.2025</div><div class="t" style="left:1747.01px;top:469.6px;font-size:16px;color:#303030;letter-spacing:-0.1px;transform-origin:0 0;transform:rotate(-90deg) translate(0,-7.5px)">22.05.2025</div><div class="t" style="left:1767.55px;top:469.6px;font-size:16px;color:#303030;letter-spacing:-0.1px;transform-origin:0 0;transform:rotate(-90deg) translate(0,-7.5px)">18.06.2025</div><div class="t" style="left:1788.08px;top:469.6px;font-size:16px;color:#303030;letter-spacing:-0.1px;transform-origin:0 0;transform:rotate(-90deg) translate(0,-7.5px)">15.07.2025</div><div class="t" style="left:1808.62px;top:469.6px;font-size:16px;color:#303030;letter-spacing:-0.1px;transform-origin:0 0;transform:rotate(-90deg) translate(0,-7.5px)">11.08.2025</div><div class="t" style="left:1829.15px;top:469.6px;font-size:16px;color:#303030;letter-spacing:-0.1px;transform-origin:0 0;transform:rotate(-90deg) translate(0,-7.5px)">07.09.2025</div><div class="t" style="left:1849.68px;top:469.6px;font-size:16px;color:#303030;letter-spacing:-0.1px;transform-origin:0 0;transform:rotate(-90deg) translate(0,-7.5px)">04.10.2025</div><div class="t" style="left:1870.22px;top:469.6px;font-size:16px;color:#303030;letter-spacing:-0.1px;transform-origin:0 0;transform:rotate(-90deg) translate(0,-7.5px)">31.10.2025</div><svg style="left:800px;top:155px" width="160" height="120"><rect x="15" y="5" width="16" height="16" fill="#a8a6a9"/><rect x="6.5" y="30.5" width="32" height="8" fill="#f4a8ae"/><line x1="6.5" y1="31" x2="38.5" y2="31" stroke="#e06a74" stroke-width="1.5"/><line x1="6.5" y1="49" x2="38.5" y2="49" stroke="#b4a8b6" stroke-width="1" stroke-dasharray="3,2"/><line x1="6.5" y1="67" x2="38.5" y2="67" stroke="#b4a8b6" stroke-width="1" stroke-dasharray="3,2"/><line x1="6.5" y1="85" x2="38.5" y2="85" stroke="#b4a8b6" stroke-width="1" stroke-dasharray="3,2"/><line x1="6.5" y1="103" x2="38.5" y2="103" stroke="#b4a8b6" stroke-width="1" stroke-dasharray="3,2"/></svg><div class="t" style="left:841.4px;top:162.00px;font-size:13px;color:#303030">Факт</div><div class="t" style="left:841.4px;top:180.00px;font-size:13px;color:#303030;letter-spacing:-0.12px">ml_quantile_reg…</div><div class="t" style="left:841.4px;top:198.00px;font-size:13px;color:#303030;letter-spacing:-0.12px">ml_quantile_reg…</div><div class="t" style="left:841.4px;top:216.00px;font-size:13px;color:#303030;letter-spacing:-0.12px">ml_quantile_reg…</div><div class="t" style="left:841.4px;top:234.00px;font-size:13px;color:#303030;letter-spacing:-0.12px">ml_quantile_reg…</div><div class="t" style="left:841.4px;top:252.00px;font-size:13px;color:#303030;letter-spacing:-0.12px">ml_quantile_reg…</div><div style="position:absolute;left:753px;top:482px;width:1130px;height:288px;border:1px solid #a4a0a6;background:#fcfbfd;overflow:hidden"></div><div style="position:absolute;left:754px;top:483px;width:1110px;height:28px;background:#efecf0;border-bottom:1px solid #d4d0d6"></div><div style="position:absolute;left:909px;top:483px;width:1px;height:28px;background:#d4d0d6"></div><div style="position:absolute;left:1101px;top:483px;width:1px;height:28px;background:#d4d0d6"></div><div style="position:absolute;left:1304px;top:483px;width:1px;height:28px;background:#d4d0d6"></div><div style="position:absolute;left:1507px;top:483px;width:1px;height:28px;background:#d4d0d6"></div><div style="position:absolute;left:1710px;top:483px;width:1px;height:28px;background:#d4d0d6"></div><div class="t" style="left:760.50px;top:489.36px;font-size:16px;color:#3a3a3a;font-weight:400;letter-spacing:-0.25px;">Дата</div><div class="t" style="left:915.50px;top:489.36px;font-size:16px;color:#3a3a3a;font-weight:400;letter-spacing:-0.12px;">ml_quantile_regressor</div><div class="t" style="left:1107.50px;top:489.36px;font-size:16px;color:#3a3a3a;font-weight:400;letter-spacing:-0.12px;">ml_quantile_regressor_70</div><div class="t" style="left:1310.50px;top:489.36px;font-size:16px;color:#3a3a3a;font-weight:400;letter-spacing:-0.12px;">ml_quantile_regressor_75</div><div class="t" style="left:1513.50px;top:489.36px;font-size:16px;color:#3a3a3a;font-weight:400;letter-spacing:-0.12px;">ml_quantile_regressor_80</div><div style="position:absolute;left:1710px;top:483px;width:153px;height:28px;overflow:hidden"><div class="t" style="left:6.4px;top:6.36px;font-size:16px;color:#3a3a3a;letter-spacing:-0.25px">ml_quantile_regressor_85</div></div><div style="position:absolute;left:754px;top:512px;width:1110px;height:238px;overflow:hidden"><div style="position:absolute;left:0px;top:1px;width:155px;height:25px;background:#b9b6bb"></div><div style="position:absolute;left:156px;top:1px;width:191px;height:25px;background:#dcd7dd"></div><div style="position:absolute;left:348px;top:1px;width:202px;height:25px;background:#dcd7dd"></div><div style="position:absolute;left:551px;top:1px;width:202px;height:25px;background:#dcd7dd"></div><div style="position:absolute;left:754px;top:1px;width:202px;height:25px;background:#dcd7dd"></div><div style="position:absolute;left:957px;top:1px;width:153px;height:25px;background:#dcd7dd"></div><div style="position:absolute;left:0px;top:27px;width:1110px;height:1px;background-image:linear-gradient(90deg,#dcd8e2 50%,transparent 50%);background-size:3px 1px"></div><div class="t" style="left:6.00px;top:5.76px;font-size:16px;color:#303030;font-weight:400;letter-spacing:-0.1px;">20.10.2025</div><div class="t" style="right:769px;top:5.76px;font-size:16px;color:#303030;font-weight:700">63,52</div><div class="t" style="right:566px;top:5.76px;font-size:16px;color:#303030;font-weight:400">65,00</div><div class="t" style="right:363px;top:5.76px;font-size:16px;color:#303030;font-weight:400">65,51</div><div class="t" style="right:160px;top:5.76px;font-size:16px;color:#303030;font-weight:400">66,03</div><div style="position:absolute;left:0px;top:55px;width:1110px;height:1px;background-image:linear-gradient(90deg,#dcd8e2 50%,transparent 50%);background-size:3px 1px"></div><div class="t" style="left:6.00px;top:33.76px;font-size:16px;color:#303030;font-weight:400;letter-spacing:-0.1px;">21.10.2025</div><div class="t" style="right:769px;top:33.76px;font-size:16px;color:#303030;font-weight:700">65,72</div><div class="t" style="right:566px;top:33.76px;font-size:16px;color:#303030;font-weight:400">66,55</div><div class="t" style="right:363px;top:33.76px;font-size:16px;color:#303030;font-weight:400">66,56</div><div class="t" style="right:160px;top:33.76px;font-size:16px;color:#303030;font-weight:400">66,57</div><div style="position:absolute;left:0px;top:83px;width:1110px;height:1px;background-image:linear-gradient(90deg,#dcd8e2 50%,transparent 50%);background-size:3px 1px"></div><div class="t" style="left:6.00px;top:61.76px;font-size:16px;color:#303030;font-weight:400;letter-spacing:-0.1px;">22.10.2025</div><div class="t" style="right:769px;top:61.76px;font-size:16px;color:#303030;font-weight:700">63,62</div><div class="t" style="right:566px;top:61.76px;font-size:16px;color:#303030;font-weight:400">63,89</div><div class="t" style="right:363px;top:61.76px;font-size:16px;color:#303030;font-weight:400">64,26</div><div class="t" style="right:160px;top:61.76px;font-size:16px;color:#303030;font-weight:400">64,64</div><div style="position:absolute;left:0px;top:111px;width:1110px;height:1px;background-image:linear-gradient(90deg,#dcd8e2 50%,transparent 50%);background-size:3px 1px"></div><div class="t" style="left:6.00px;top:89.76px;font-size:16px;color:#303030;font-weight:400;letter-spacing:-0.1px;">23.10.2025</div><div class="t" style="right:769px;top:89.76px;font-size:16px;color:#303030;font-weight:700">60,86</div><div class="t" style="right:566px;top:89.76px;font-size:16px;color:#303030;font-weight:400">62,72</div><div class="t" style="right:363px;top:89.76px;font-size:16px;color:#303030;font-weight:400">62,84</div><div class="t" style="right:160px;top:89.76px;font-size:16px;color:#303030;font-weight:400">62,96</div><div style="position:absolute;left:0px;top:139px;width:1110px;height:1px;background-image:linear-gradient(90deg,#dcd8e2 50%,transparent 50%);background-size:3px 1px"></div><div class="t" style="left:6.00px;top:117.76px;font-size:16px;color:#303030;font-weight:400;letter-spacing:-0.1px;">24.10.2025</div><div class="t" style="right:769px;top:117.76px;font-size:16px;color:#303030;font-weight:700">57,17</div><div class="t" style="right:566px;top:117.76px;font-size:16px;color:#303030;font-weight:400">57,65</div><div class="t" style="right:363px;top:117.76px;font-size:16px;color:#303030;font-weight:400">57,88</div><div class="t" style="right:160px;top:117.76px;font-size:16px;color:#303030;font-weight:400">58,11</div><div style="position:absolute;left:0px;top:167px;width:1110px;height:1px;background-image:linear-gradient(90deg,#dcd8e2 50%,transparent 50%);background-size:3px 1px"></div><div class="t" style="left:6.00px;top:145.76px;font-size:16px;color:#303030;font-weight:400;letter-spacing:-0.1px;">25.10.2025</div><div class="t" style="right:769px;top:145.76px;font-size:16px;color:#303030;font-weight:700">33,22</div><div class="t" style="right:566px;top:145.76px;font-size:16px;color:#303030;font-weight:400">36,89</div><div class="t" style="right:363px;top:145.76px;font-size:16px;color:#303030;font-weight:400">37,81</div><div class="t" style="right:160px;top:145.76px;font-size:16px;color:#303030;font-weight:400">38,74</div><div style="position:absolute;left:0px;top:195px;width:1110px;height:1px;background-image:linear-gradient(90deg,#dcd8e2 50%,transparent 50%);background-size:3px 1px"></div><div class="t" style="left:6.00px;top:173.76px;font-size:16px;color:#303030;font-weight:400;letter-spacing:-0.1px;">26.10.2025</div><div class="t" style="right:769px;top:173.76px;font-size:16px;color:#303030;font-weight:700">37,83</div><div class="t" style="right:566px;top:173.76px;font-size:16px;color:#303030;font-weight:400">42,24</div><div class="t" style="right:363px;top:173.76px;font-size:16px;color:#303030;font-weight:400">42,67</div><div class="t" style="right:160px;top:173.76px;font-size:16px;color:#303030;font-weight:400">43,10</div><div style="position:absolute;left:0px;top:223px;width:1110px;height:1px;background-image:linear-gradient(90deg,#dcd8e2 50%,transparent 50%);background-size:3px 1px"></div><div class="t" style="left:6.00px;top:201.76px;font-size:16px;color:#303030;font-weight:400;letter-spacing:-0.1px;">27.10.2025</div><div class="t" style="right:769px;top:201.76px;font-size:16px;color:#303030;font-weight:700">66,61</div><div class="t" style="right:566px;top:201.76px;font-size:16px;color:#303030;font-weight:400">69,46</div><div class="t" style="right:363px;top:201.76px;font-size:16px;color:#303030;font-weight:400">69,84</div><div class="t" style="right:160px;top:201.76px;font-size:16px;color:#303030;font-weight:400">70,23</div><div style="position:absolute;left:0px;top:251px;width:1110px;height:1px;background-image:linear-gradient(90deg,#dcd8e2 50%,transparent 50%);background-size:3px 1px"></div><div class="t" style="left:6.00px;top:229.76px;font-size:16px;color:#303030;font-weight:400;letter-spacing:-0.1px;">28.10.2025</div><div class="t" style="right:769px;top:229.76px;font-size:16px;color:#303030;font-weight:700">65,33</div><div class="t" style="right:566px;top:229.76px;font-size:16px;color:#303030;font-weight:400">65,78</div><div class="t" style="right:363px;top:229.76px;font-size:16px;color:#303030;font-weight:400">66,11</div><div class="t" style="right:160px;top:229.76px;font-size:16px;color:#303030;font-weight:400">66,44</div></div><svg style="left:1867.5px;top:493.5px" width="12" height="12"><path d="M2.5 8.5 L9.5 8.5 L6 3.5 Z" fill="#c4c0c6"/></svg><div style="position:absolute;left:1867px;top:517px;width:12px;height:198px;background:#dad6de;border-radius:6px"></div><div style="position:absolute;left:1867px;top:517px;width:12px;height:48px;background:#8f8b91;border-radius:6px"></div><svg style="left:1867px;top:727px" width="12" height="12"><path d="M2.5 3.5 L9.5 3.5 L6 8.5 Z" fill="#444246"/></svg><svg style="left:764px;top:754px" width="12" height="12"><path d="M8.5 2.5 L8.5 9.5 L3.5 6 Z" fill="#c4c0c6"/></svg><div style="position:absolute;left:788px;top:754px;width:1041px;height:12px;background:#dad6de;border-radius:6px"></div><div style="position:absolute;left:788px;top:754px;width:762px;height:12px;background:#8f8b91;border-radius:6px"></div><svg style="left:1840px;top:754.5px" width="12" height="12"><path d="M3.5 2.5 L3.5 9.5 L8.5 6 Z" fill="#444246"/></svg></body></html>
